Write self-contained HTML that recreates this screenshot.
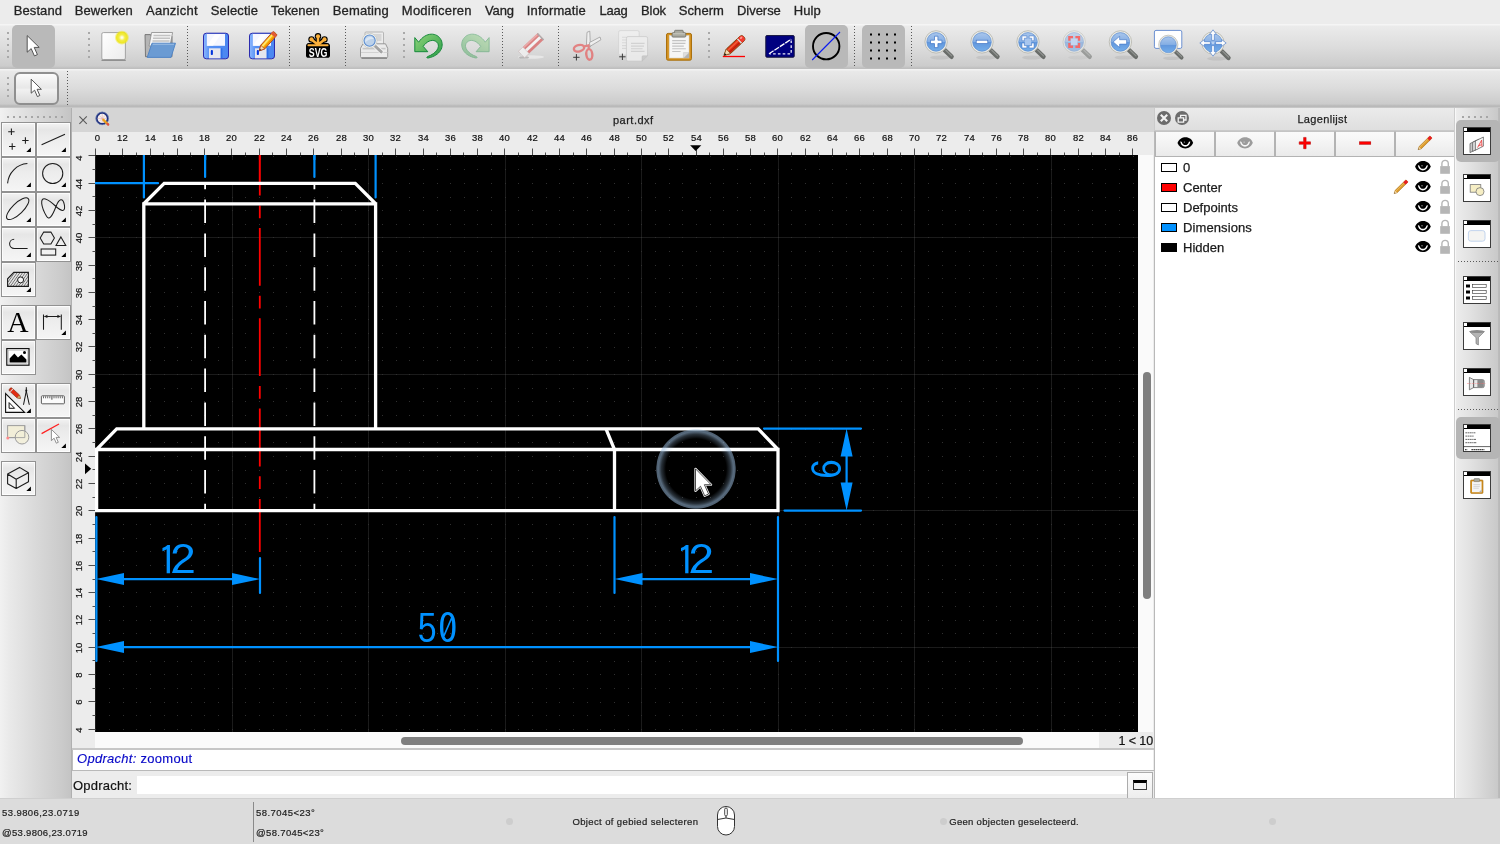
<!DOCTYPE html>
<html lang="nl">
<head>
<meta charset="utf-8">
<title>part.dxf - QCAD</title>
<style>
html,body{margin:0;padding:0;}
body{width:1500px;height:844px;overflow:hidden;background:#ececec;font-family:"Liberation Sans",sans-serif;font-size:13px;color:#262626;position:relative;}
.abs{position:absolute;}
#menubar{position:absolute;left:0;top:0;width:1500px;height:24px;background:#ececec;}
#menubar span{-webkit-text-stroke:0.3px #242424;position:absolute;top:3px;line-height:16px;font-size:13px;white-space:nowrap;color:#242424;}
#tb1{position:absolute;left:0;top:24px;width:1500px;height:45px;background:linear-gradient(#f5f5f5 0,#f5f5f5 1px,#ebebeb 2px,#dddddd 50%,#cccccc 93%,#bfbfbf 98%,#bfbfbf 100%);}
#tb2{position:absolute;left:0;top:69px;width:1500px;height:38px;background:linear-gradient(#f3f3f3 0,#f3f3f3 1px,#e9e9e9 2px,#dcdcdc 50%,#cbcbcb 92%,#b9b9b9 97%,#b9b9b9 100%);}
.sel{position:absolute;background:#b9b9b9;border-radius:5px;}
.vsep{position:absolute;top:2px;width:1px;height:40px;background:repeating-linear-gradient(180deg,#585858 0,#585858 1px,transparent 1px,transparent 3px);}
.hsep{position:absolute;left:4px;height:1px;width:40px;background:repeating-linear-gradient(90deg,#585858 0,#585858 1px,transparent 1px,transparent 3px);}
.hdl{position:absolute;width:2px;}
.hdl i{position:absolute;left:0;width:2px;height:2px;background:#a9a9a9;}
svg{position:absolute;overflow:visible;}
#left{position:absolute;left:0;top:107px;width:72px;height:691px;background:linear-gradient(90deg,#f1f1f1 0%,#e9e9e9 14%,#d9d9d9 50%,#cbcbcb 85%,#c3c3c3 100%);}
.lb{position:absolute;width:32.8px;height:33px;border:1px solid #929292;background:linear-gradient(#f3f3f3 0%,#e6e6e6 20%,#ececec 42%,#f5f5f5 100%);box-shadow:inset 0 0 0 1px rgba(255,255,255,0.75);box-sizing:content-box;}
.lb svg{left:0;top:0;}
#tabbar{position:absolute;left:72px;top:108px;width:1082px;height:24px;background:#d5d5d5;}
#hruler{position:absolute;left:72px;top:132px;width:1081px;height:23px;background:#ececec;overflow:hidden;}
#vruler{position:absolute;left:72px;top:155px;width:23px;height:593px;background:#ececec;overflow:hidden;}
.rl{-webkit-text-stroke:0.2px #111;position:absolute;font-size:9.5px;line-height:10px;color:#111;white-space:nowrap;}
#status{position:absolute;left:0;top:798px;width:1500px;height:46px;background:#dcdcdc;}
#status span{-webkit-text-stroke:0.2px #1e1e1e;position:absolute;font-size:9.5px;line-height:12px;white-space:nowrap;color:#1e1e1e;}
.dot{position:absolute;width:7px;height:7px;border-radius:50%;background:#cdcdcd;}
#right{position:absolute;left:1155px;top:108px;width:299px;height:690px;background:#fff;}
#rtb{position:absolute;left:1454px;top:107px;width:46px;height:691px;background:linear-gradient(90deg,#f4f4f4 0%,#ececec 6%,#e2e2e2 35%,#d3d3d3 70%,#c9c9c9 95%,#b9b9b9 97%,#b9b9b9 100%);}
.wi{position:absolute;left:9.3px;width:25.6px;height:25.8px;border:1px solid #3c3c3c;background:#fff;box-sizing:content-box;}
.wi:before{content:"";position:absolute;left:0;top:0;width:25.6px;height:4px;background:#000;}
.wi:after{content:"";position:absolute;left:0;top:0;width:3px;height:3.2px;background:#fff;}
.lrow{position:absolute;left:0;width:299px;height:20px;}
.lrow b{position:absolute;left:6px;top:5px;width:14px;height:7px;border:1px solid #000;}
.lrow span{-webkit-text-stroke:0.25px #1a1a1a;position:absolute;left:28px;top:1px;transform:translateY(0.6px);line-height:16px;font-size:13px;color:#1a1a1a;font-weight:normal;}
.lbtn{position:absolute;top:23px;height:24px;width:58px;border:1px solid #b3b3b3;border-top-color:#c4c4c4;background:linear-gradient(#fafafa,#f3f3f3 50%,#eaeaea);box-sizing:content-box;}
</style>
</head>
<body>
<div id="app" style="position:absolute;left:0;top:0;width:1500px;height:844px;overflow:hidden;will-change:transform">
<div id="menubar">
<span style="left:13.8px;letter-spacing:0.07px">Bestand</span>
<span style="left:74.8px;letter-spacing:0.02px">Bewerken</span>
<span style="left:146.0px;letter-spacing:0.24px">Aanzicht</span>
<span style="left:210.8px;letter-spacing:0.12px">Selectie</span>
<span style="left:271.0px;letter-spacing:-0.05px">Tekenen</span>
<span style="left:332.8px;letter-spacing:0.13px">Bemating</span>
<span style="left:401.8px;letter-spacing:0.25px">Modificeren</span>
<span style="left:485.0px;letter-spacing:-0.15px">Vang</span>
<span style="left:526.8px;letter-spacing:0.12px">Informatie</span>
<span style="left:599.4px;letter-spacing:-0.23px">Laag</span>
<span style="left:641.0px;letter-spacing:-0.08px">Blok</span>
<span style="left:678.8px;letter-spacing:0.07px">Scherm</span>
<span style="left:737.0px;letter-spacing:-0.04px">Diverse</span>
<span style="left:793.8px;letter-spacing:0.06px">Hulp</span>
</div>
<div id="tb1">
<div class="sel" style="left:12px;top:1px;width:43px;height:43px"></div>
<div class="sel" style="left:805px;top:1px;width:43px;height:43px"></div>
<div class="sel" style="left:862px;top:1px;width:43px;height:43px"></div>
<div class="hdl" style="left:7px;top:8px"><i style="top:0"></i><i style="top:6px"></i><i style="top:12px"></i><i style="top:18px"></i><i style="top:24px"></i></div>
<div class="hdl" style="left:88px;top:8px"><i style="top:0"></i><i style="top:6px"></i><i style="top:12px"></i><i style="top:18px"></i><i style="top:24px"></i></div>
<div class="hdl" style="left:403px;top:8px"><i style="top:0"></i><i style="top:6px"></i><i style="top:12px"></i><i style="top:18px"></i><i style="top:24px"></i></div>
<div class="hdl" style="left:708px;top:8px"><i style="top:0"></i><i style="top:6px"></i><i style="top:12px"></i><i style="top:18px"></i><i style="top:24px"></i></div>
<div class="vsep" style="left:187px"></div>
<div class="vsep" style="left:289px"></div>
<div class="vsep" style="left:345px"></div>
<div class="vsep" style="left:502px"></div>
<div class="vsep" style="left:558px"></div>
<div class="vsep" style="left:854px"></div>
<div class="vsep" style="left:911px"></div>
<svg width="1500" height="45" viewBox="0 24 1500 45" style="left:0;top:0">
<defs>
<linearGradient id="gLens" x1="0" y1="0" x2="0" y2="1"><stop offset="0" stop-color="#a9c6ec"/><stop offset="0.48" stop-color="#86afe4"/><stop offset="0.5" stop-color="#6196dc"/><stop offset="1" stop-color="#74aeea"/></linearGradient>
<linearGradient id="gGreen" x1="0" y1="0" x2="1" y2="1"><stop offset="0" stop-color="#8fd47a"/><stop offset="1" stop-color="#2a9c47"/></linearGradient>
<linearGradient id="gFloppy" x1="0" y1="0" x2="1" y2="0"><stop offset="0" stop-color="#8db8ff"/><stop offset="0.25" stop-color="#5590f4"/><stop offset="1" stop-color="#4a86f0"/></linearGradient>
<radialGradient id="gGlow"><stop offset="0" stop-color="#ffffff"/><stop offset="0.14" stop-color="#fdfbd0"/><stop offset="0.4" stop-color="#f3ed48"/><stop offset="0.72" stop-color="#eee61a" stop-opacity="0.95"/><stop offset="1" stop-color="#eee61a" stop-opacity="0"/></radialGradient>
<linearGradient id="gPaper" x1="0" y1="0" x2="1" y2="1"><stop offset="0" stop-color="#ffffff"/><stop offset="1" stop-color="#ececec"/></linearGradient>
<g id="mag">
<ellipse cx="4" cy="15.6" rx="10" ry="2" fill="#000" opacity="0.07"/>
<path d="M8.6 8.2L15.4 14.8" stroke="#6a6d6a" stroke-width="4.6" stroke-linecap="round"/>
<path d="M9.8 8.4L15.6 14" stroke="#8f928f" stroke-width="1.3" stroke-linecap="round"/>
<circle cx="0" cy="0" r="11.2" fill="#ecece6" stroke="#b4b4ac" stroke-width="0.8"/>
<circle cx="0" cy="0" r="9.3" fill="url(#gLens)" stroke="#5a8bd0" stroke-width="0.7"/>
</g>
<g id="floppy">
<rect x="0.5" y="0.5" width="25" height="25.6" rx="2.8" fill="url(#gFloppy)" stroke="#2b2bae" stroke-width="1"/>
<rect x="3.8" y="1.3" width="18.2" height="11.8" fill="#f4f6ff"/>
<path d="M4 13L12 1.5h6L10 13z" fill="#fff" opacity="0.8"/>
<rect x="6" y="15.6" width="11.6" height="10" fill="#e6e6ee"/>
<rect x="7.8" y="17.4" width="2.1" height="5" rx="0.8" fill="#0033dd"/>
<rect x="17.8" y="15.6" width="1.6" height="10" fill="#2f6fe8"/>
</g>
</defs>
<!-- pointer -->
<path d="M27.2 35.6V52.2L31.2 48.6L34.4 55.9L37.4 54.6L34.2 47.4H39.2Z" fill="#fff" stroke="#444" stroke-width="0.9" stroke-linejoin="round"/>
<!-- new -->
<rect x="101.8" y="32.6" width="23.6" height="27" rx="1.5" fill="url(#gPaper)" stroke="#a4a4a4" stroke-width="1"/>
<path d="M101.5 60.3H125.8" stroke="#8a8a8a" stroke-width="1.2"/>
<circle cx="121.9" cy="37.6" r="7.4" fill="url(#gGlow)"/>
<!-- open -->
<path d="M145 34.6h5.5l1 1.6h20.5v20.5h-26.5z" fill="#b5b5b5" stroke="#6e6e6e" stroke-width="0.9" stroke-linejoin="round"/>
<path d="M151.6 32.5h21l-2.6 13.5h-21z" fill="#f4f4f4" stroke="#8a8a8a" stroke-width="0.8"/>
<path d="M153.5 35.5h17M153 38.2h17M152.5 41h17" stroke="#c2c2c2" stroke-width="1.4"/>
<path d="M152 43.2H175.5L171 57.4H147.2Z" fill="#6b9bd3" stroke="#4d82c4" stroke-width="0.9" stroke-linejoin="round"/>
<path d="M152.8 44.3H174" stroke="#9cbde4" stroke-width="1"/>
<!-- save -->
<use href="#floppy" x="203" y="32.7"/>
<!-- save as -->
<use href="#floppy" x="249" y="32.7"/>
<g transform="translate(259.4 50.8) rotate(-48.2)">
<path d="M0 0L5 -2.7H22.6a1.2 1.2 0 0 1 1.2 1.2V1.5a1.2 1.2 0 0 1 -1.2 1.2H5Z" fill="#fcbf10" stroke="#a8300a" stroke-width="0.8" stroke-linejoin="round"/>
<path d="M5 -0.9H20" stroke="#ffe680" stroke-width="1.4"/>
<path d="M5 1.5H20" stroke="#f08a00" stroke-width="1.2"/>
<path d="M0 0L5 -2.7V2.7Z" fill="#f6dcb0" stroke="#a8300a" stroke-width="0.6"/>
<path d="M0 0L1.8 -1V1Z" fill="#333"/>
<path d="M20.3 -2.7h3.1v5.4h-3.1z" fill="#e05838"/>
</g>
<!-- SVG -->
<g stroke="#000" stroke-width="4.8" stroke-linecap="round" fill="none">
<path d="M318 44.5V36.6M318 44.8L311.8 39.7M318 44.8L324.2 39.7M309 45.3H327"/>
</g>
<circle cx="318" cy="36.3" r="3.2" fill="#000"/><circle cx="311.5" cy="39.4" r="3.2" fill="#000"/><circle cx="324.5" cy="39.4" r="3.2" fill="#000"/>
<rect x="306" y="43.4" width="24" height="14.4" rx="2.6" fill="#000"/>
<g stroke="#fbb03b" stroke-width="2.5" stroke-linecap="round" fill="none">
<path d="M318 44.5V36.6M318 44.8L311.8 39.7M318 44.8L324.2 39.7"/>
</g>
<path d="M308.4 45.3H327.6" stroke="#fbb03b" stroke-width="1.9" stroke-linecap="round"/>
<circle cx="318" cy="36.3" r="2.1" fill="#fbb03b"/><circle cx="311.5" cy="39.4" r="2.1" fill="#fbb03b"/><circle cx="324.5" cy="39.4" r="2.1" fill="#fbb03b"/>
<text transform="translate(318.1 56.7) scale(0.66 1)" text-anchor="middle" font-family="Liberation Sans, sans-serif" font-weight="bold" font-size="13.4" fill="#fff">SVG</text>
<!-- print preview -->
<rect x="365" y="32" width="18.5" height="14" rx="1" fill="#ececec" stroke="#a8a8a8" stroke-width="0.8"/>
<rect x="374" y="34" width="7.5" height="7" fill="#d6d6d6"/>
<path d="M363 43.8h22.5l2.2 4.5v8.2a1.2 1.2 0 0 1 -1.2 1.2h-24.8a1.2 1.2 0 0 1 -1.2 -1.2v-8.2z" fill="#ebebeb" stroke="#8e8e8e" stroke-width="0.9"/>
<path d="M361 52.5h26.4" stroke="#d2d2d2" stroke-width="1"/>
<path d="M362.6 48.6h23" stroke="#c6c6c6" stroke-width="1.6"/>
<path d="M361.5 58.2h25.5" stroke="#7e7e7e" stroke-width="1.2"/>
<path d="M375 46L381.3 51.8" stroke="#f4f4f4" stroke-width="4.6" stroke-linecap="round"/>
<path d="M375 46L381.3 51.8" stroke="#a4a4a4" stroke-width="3" stroke-linecap="round"/>
<circle cx="369.6" cy="40.6" r="7.4" fill="#f4f4f0" stroke="#c4c4bc" stroke-width="0.7"/>
<circle cx="369.6" cy="40.6" r="5.6" fill="#bdd2ea" stroke="#5b8ccf" stroke-width="1.1"/>
<path d="M365.4 42.5a4.6 4.6 0 0 1 8.4 -3.5a9 9 0 0 0 -8.4 3.5z" fill="#dbe7f5"/>
<!-- undo -->
<path id="undo" d="M414.8 37.6V51.7H427.8L423.2 46.4C426.6 41.2 431.8 39.4 435.2 41C440.8 43.6 439.6 52.2 427.4 56.7C426.4 57.1 426.8 58.3 428 58C440.6 55.6 444.4 46.4 441 39.8C437.2 32.4 426 31.4 418.6 42.2Z" fill="url(#gGreen)" stroke="#16893a" stroke-width="1" stroke-linejoin="round"/>
<use href="#undo" transform="translate(903.9 0) scale(-1 1)" opacity="0.42"/>
<!-- eraser (disabled) -->
<g opacity="0.62">
<ellipse cx="531" cy="57" rx="13" ry="1.8" fill="#fff" opacity="0.7"/>
<ellipse cx="524" cy="57.4" rx="5" ry="1.2" fill="#777" opacity="0.6"/>
<g transform="translate(518.4 51.3) rotate(-43.3)">
<rect x="0" y="0" width="26.6" height="9" fill="#d84a4a"/>
<rect x="0" y="3.2" width="26.6" height="2.9" fill="#fff"/>
<rect x="0" y="0" width="6.2" height="9" fill="#fafafa" stroke="#b9b9b9" stroke-width="0.5"/>
<rect x="25.4" y="0" width="1.4" height="9" fill="#8a8a8a"/>
<rect x="6.2" y="0" width="19" height="1.6" fill="#ef8a8a"/>
</g>
</g>
<!-- cut -->
<g opacity="0.78">
<path d="M586.4 46L587 32.3L589.8 31.2L590.4 47Z" fill="#f3f3f3" stroke="#8a8a8a" stroke-width="0.8" stroke-linejoin="round"/>
<path d="M589.4 42.6L600 37L600.9 39.8L590 46.4Z" fill="#f3f3f3" stroke="#8a8a8a" stroke-width="0.8" stroke-linejoin="round"/>
<ellipse cx="579" cy="48.2" rx="5.2" ry="3.2" transform="rotate(-14 579 48.2)" fill="none" stroke="#e46a6a" stroke-width="2.4"/>
<ellipse cx="589.3" cy="54.4" rx="3" ry="5.3" transform="rotate(-6 589.3 54.4)" fill="none" stroke="#e46a6a" stroke-width="2.4"/>
<path d="M583.6 46.6L588.6 45.2L588.8 49.6" stroke="#e46a6a" stroke-width="2.2" fill="none" stroke-linejoin="round"/>
</g>
<path d="M573.2 57.3h6.4M576.4 54.1v6.4" stroke="#3a3a3a" stroke-width="1"/>
<!-- copy -->
<g opacity="0.8">
<rect x="618.6" y="30.6" width="20.6" height="24.4" rx="1.6" fill="#f0f0f0" stroke="#cfcfcf" stroke-width="0.8"/>
<path d="M622 37.2h6M622 40h6M622 42.8h6M622 45.6h6M622 48.4h6" stroke="#d6d6d6" stroke-width="1.1"/>
<path d="M628 36.6h18a1.6 1.6 0 0 1 1.6 1.6v17.6l-5.6 5.4h-14a1.6 1.6 0 0 1 -1.6 -1.6v-21.4a1.6 1.6 0 0 1 1.6 -1.6z" fill="#efefef" stroke="#c4c4c4" stroke-width="0.8"/>
<path d="M631 43.4h13.6M631 46.1h13M631 48.7h11.6M631 51.4h13.6" stroke="#d0d0d0" stroke-width="1.1"/>
<path d="M647.6 55.8l-5.6 5.4v-4.4a1 1 0 0 1 1 -1z" fill="#c9c9c9" stroke="#b4b4b4" stroke-width="0.5"/>
</g>
<path d="M619.2 56.8h6.4M622.4 53.6v6.4" stroke="#3a3a3a" stroke-width="1"/>
<!-- paste -->
<rect x="666.5" y="33.4" width="25" height="26.8" rx="1.6" fill="#d4911f" stroke="#a9700f" stroke-width="1"/>
<rect x="669.2" y="35.6" width="19.8" height="22.4" fill="#f6f6f6" stroke="#d8d8d0" stroke-width="0.6"/>
<path d="M672.2 40.6h13.6M672.2 43.4h13.2M672.2 46.1h11.6M672.2 48.8h13.6M672.2 51.5h8.4" stroke="#c3c3c3" stroke-width="1.1"/>
<path d="M689 52.6v5.4h-5.6z" fill="#b3b3b3"/><path d="M683.4 52.6h5.6l-5.6 5.4z" fill="#dedede" stroke="#bdbdbd" stroke-width="0.4"/>
<path d="M675.4 30.3h7a0.8 0.8 0 0 1 0.8 0.8v1.6h1.6a1 1 0 0 1 1 1v2.4a1 1 0 0 1 -1 1h-11.8a1 1 0 0 1 -1 -1v-2.4a1 1 0 0 1 1 -1h1.6v-1.6a0.8 0.8 0 0 1 0.8 -0.8z" fill="#a9a99f" stroke="#6c6c64" stroke-width="0.8"/>
<path d="M673 33.8h12" stroke="#c9c9c0" stroke-width="1"/>
<!-- pencil red -->
<path d="M722.8 56.5H745" stroke="#ff0000" stroke-width="1.3"/>
<g transform="translate(724 55.4) rotate(-43)">
<path d="M0 0L6 -3.1H24.6a2.6 2.6 0 0 1 2.6 2.6V0.5a2.6 2.6 0 0 1 -2.6 2.6H6Z" fill="#e32c12" stroke="#7a4a14" stroke-width="0.9" stroke-linejoin="round"/>
<path d="M6 -1H20" stroke="#f0603a" stroke-width="1.4"/>
<path d="M6 1.4H20" stroke="#b8200c" stroke-width="1.2"/>
<path d="M0 0L6 -3.1V3.1Z" fill="#f3d9b0" stroke="#7a4a14" stroke-width="0.6"/>
<path d="M0 0L2.2 -1.15V1.15Z" fill="#111"/>
<rect x="20.4" y="-3" width="1.6" height="6" fill="#d6d6d6"/>
<path d="M22 -3h2.6a2.4 2.4 0 0 1 2.4 2.4v1.2a2.4 2.4 0 0 1 -2.4 2.4h-2.6z" fill="#f23a30"/>
<ellipse cx="24.6" cy="-1.2" rx="1.4" ry="0.9" fill="#ff9a90"/>
</g>
<!-- navy tri -->
<rect x="765.8" y="35.6" width="28.4" height="21.6" rx="1" fill="#000080" stroke="#14143c" stroke-width="1"/>
<path d="M769 53.8L791.2 39.2" stroke="#fff" stroke-width="1.3" stroke-dasharray="5.5 1"/>
<path d="M791.2 40.5V53.8H769.5" stroke="#e8e8f8" stroke-width="1.3" fill="none" stroke-dasharray="2.6 2.2"/>
<!-- circle slash -->
<circle cx="826.2" cy="46.2" r="13.2" fill="none" stroke="#000" stroke-width="1.9"/>
<path d="M812.2 60L840 32" stroke="#0a1af0" stroke-width="1.1"/>
<!-- grid dots -->
<path d="M870 34.5h2M878 34.5h2M886 34.5h2M894 34.5h2M870 42.5h2M878 42.5h2M886 42.5h2M894 42.5h2M870 50.5h2M878 50.5h2M886 50.5h2M894 50.5h2M870 58.5h2M878 58.5h2M886 58.5h2M894 58.5h2" stroke="#000" stroke-width="2"/>
<!-- zoom in -->
<use href="#mag" x="936.1" y="41.9"/>
<path d="M934.5 36.2h3.4v4h4v3.4h-4v4h-3.4v-4h-4v-3.4h4z" fill="#fff" stroke="#3c72c4" stroke-width="0.7"/>
<!-- zoom out -->
<use href="#mag" x="982" y="41.9"/>
<rect x="976.2" y="40.2" width="11.6" height="3.4" fill="#fff" stroke="#3c72c4" stroke-width="0.7"/>
<!-- zoom auto -->
<use href="#mag" x="1028" y="41.9"/>
<rect x="1024.8" y="38.7" width="6.4" height="6.4" fill="#a8c6ee"/>
<path d="M1022.0 35.9h4.8v2.3h-2.5v2.5h-2.3zM1022.0 47.9h4.8v-2.3h-2.5v-2.5h-2.3zM1034.0 35.9h-4.8v2.3h2.5v2.5h2.3zM1034.0 47.9h-4.8v-2.3h2.5v-2.5h2.3z" fill="#fff" stroke="#3c72c4" stroke-width="0.5"/>
<!-- zoom selection (disabled) -->
<g opacity="0.55"><use href="#mag" x="1074.2" y="41.9"/></g>
<rect x="1071" y="38.7" width="6.4" height="6.4" fill="#c3d6f0"/>
<path d="M1068.2 35.9h4.8v2.3h-2.5v2.5h-2.3zM1068.2 47.9h4.8v-2.3h-2.5v-2.5h-2.3zM1080.2 35.9h-4.8v2.3h2.5v2.5h2.3zM1080.2 47.9h-4.8v-2.3h2.5v-2.5h2.3z" fill="#f26a6a"/>
<!-- zoom previous -->
<use href="#mag" x="1120.4" y="41.9"/>
<path d="M1113.2 41.9l6.4-5.6v3.4h7v4.4h-7v3.4z" fill="#fff" stroke="#3c72c4" stroke-width="0.6" stroke-linejoin="round"/>
<!-- zoom window -->
<rect x="1154.4" y="30.4" width="27.4" height="18" rx="1.6" fill="#fff" stroke="#6b90d2" stroke-width="1"/>
<g transform="translate(1168.3 44.8) scale(0.86)"><use href="#mag"/></g>
<!-- pan zoom -->
<use href="#mag" x="1213" y="43"/>
<path transform="rotate(0 1213 43)" d="M1213 29.8l3.4 4.6h-2.1v6h-2.6v-6h-2.1z" fill="#fff" stroke="#3c72c4" stroke-width="0.6" stroke-linejoin="round"/>
<path transform="rotate(90 1213 43)" d="M1213 29.8l3.4 4.6h-2.1v6h-2.6v-6h-2.1z" fill="#fff" stroke="#3c72c4" stroke-width="0.6" stroke-linejoin="round"/>
<path transform="rotate(180 1213 43)" d="M1213 29.8l3.4 4.6h-2.1v6h-2.6v-6h-2.1z" fill="#fff" stroke="#3c72c4" stroke-width="0.6" stroke-linejoin="round"/>
<path transform="rotate(270 1213 43)" d="M1213 29.8l3.4 4.6h-2.1v6h-2.6v-6h-2.1z" fill="#fff" stroke="#3c72c4" stroke-width="0.6" stroke-linejoin="round"/>
<rect x="1211.7" y="41.7" width="2.6" height="2.6" fill="#b8d0f0"/>
</svg>

</div>
<div id="tb2">
<div class="hdl" style="left:7px;top:8px"><i style="top:0"></i><i style="top:6px"></i><i style="top:12px"></i><i style="top:18px"></i></div>
<div class="abs" style="left:14px;top:3px;width:41.4px;height:29px;border:2px solid #8f8f8f;border-radius:6px;background:linear-gradient(#fbfbfb 0%,#e8e8e8 48%,#f1f1f1 54%,#dbdbdb 100%)"></div>
<div class="vsep" style="left:67px;top:2px;height:35px"></div>
<svg width="70" height="38" viewBox="0 69 70 38" style="left:0;top:0">
<path d="M31.2 79.2V93.2L34.6 90.2L37.4 96.6L39.8 95.5L37.1 89.3H41.4Z" fill="#fff" stroke="#444" stroke-width="0.9" stroke-linejoin="round"/>
</svg>

</div>
<div id="left">
<div class="abs" style="left:71px;top:0;width:1px;height:691px;background:#b0b0b0"></div>
<svg width="72" height="4" style="left:0;top:9px"><path d="M7 1H65" stroke="#a6a6a6" stroke-width="2" stroke-dasharray="2 4" fill="none"/></svg>
<div class="lb" style="left:1px;top:15px"></div>
<div class="lb" style="left:36px;top:15px"></div>
<div class="lb" style="left:1px;top:50px"></div>
<div class="lb" style="left:36px;top:50px"></div>
<div class="lb" style="left:1px;top:85px"></div>
<div class="lb" style="left:36px;top:85px"></div>
<div class="lb" style="left:1px;top:120px"></div>
<div class="lb" style="left:36px;top:120px"></div>
<div class="lb" style="left:1px;top:155px"></div>
<div class="lb" style="left:1px;top:198px"></div>
<div class="lb" style="left:36px;top:198px"></div>
<div class="lb" style="left:1px;top:233px"></div>
<div class="lb" style="left:1px;top:276px"></div>
<div class="lb" style="left:36px;top:276px"></div>
<div class="lb" style="left:1px;top:311px"></div>
<div class="lb" style="left:36px;top:311px"></div>
<div class="lb" style="left:1px;top:354px"></div>
<svg width="72" height="691" viewBox="0 107 72 691" style="left:0;top:0">
<path d="M30.9 147.4v4.6h-4.6zM65.9 147.4v4.6h-4.6zM30.9 182.4v4.6h-4.6zM65.9 182.4v4.6h-4.6zM30.9 217.4v4.6h-4.6zM65.9 217.4v4.6h-4.6zM30.9 252.4v4.6h-4.6zM65.9 252.4v4.6h-4.6zM30.9 287.4v4.6h-4.6zM65.9 330.4v4.6h-4.6zM30.9 408.4v4.6h-4.6zM65.9 443.4v4.6h-4.6zM30.9 486.4v4.6h-4.6z" fill="#000"/>
<g fill="none" stroke="#1c1c1c" stroke-width="1.05">
<path d="M8.2 131.7h6.4M11.4 128.5v6.4M22.2 140.5h6.4M25.4 137.3v6.4M9 146.5h6.4M12.2 143.3v6.4"/>
<path d="M41.6 144.8L65 134.2"/>
<path d="M7.6 183.4A21.4 21.4 0 0 1 27.4 163.6"/>
<circle cx="52.7" cy="173.5" r="10.1"/>
<ellipse cx="17.7" cy="208.7" rx="14.6" ry="5.4" transform="rotate(-44 17.7 208.7)"/>
<path d="M41.7 203.5C41 195.5 47.5 198.5 56 206.5C62 212 65.6 212 64.4 205C63 197 59 198.5 56 206.5C52 217 49 220.5 46.4 216C44 212 42.2 208 41.7 203.5Z"/>
<path d="M14.2 239.2A4.6 4.6 0 0 0 14.2 248.4H27.6"/>
<path d="M40.2 238L43.7 232.1H50.9L54.4 238L50.9 243.9H43.7Z"/>
<path d="M60.9 236.9L65.8 245.4H56Z"/>
<rect x="41.1" y="249" width="14.6" height="6.1"/>
<path d="M43.5 314.6V329.8M61.3 314.6V329.8M44.5 316.4H60.3"/>
</g>
<defs><pattern id="hat" width="2.2" height="2.2" patternUnits="userSpaceOnUse" patternTransform="rotate(-55)"><rect width="2.2" height="2.2" fill="#e2e2e2"/><path d="M0 1.1H2.2" stroke="#6a6a6a" stroke-width="0.7"/></pattern></defs>
<path d="M7.6 286.4V278.8L13.8 272.4H28.4V286.4Z" fill="url(#hat)" stroke="#1c1c1c" stroke-width="1.1"/>
<circle cx="20.6" cy="279.9" r="3" fill="#f4f4f4" stroke="#1c1c1c" stroke-width="1"/>
<path d="M44 316.4l3.4-1.6v3.2zM60.8 316.4l-3.4-1.6v3.2z" fill="#1c1c1c"/>
<text x="18" y="331.9" text-anchor="middle" font-family="Liberation Serif, serif" font-size="29.5" fill="#000">A</text>
<rect x="6.8" y="348.6" width="22.2" height="16.6" fill="#fff" stroke="#111" stroke-width="1.2"/>
<rect x="8.4" y="350.2" width="19" height="13.4" fill="none" stroke="#aaa" stroke-width="0.5"/>
<path d="M9.6 362.4V358.6L14.4 353.6L18 357.4L21.4 354.6L26.4 359.6V362.4Z" fill="#000"/>
<circle cx="24.5" cy="352.6" r="1.5" fill="#000"/>
<!-- modify -->
<path d="M5.6 393.6V412.4H24.6Z" fill="#fdfdfd" stroke="#111" stroke-width="1.1" stroke-linejoin="miter"/>
<path d="M9.1 402.6V408.3H14.6Z" fill="none" stroke="#111" stroke-width="1"/>
<g transform="translate(20.4 398.4) rotate(-137.5)">
<path d="M0 0L3 -1.9H13a1.4 1.4 0 0 1 1.4 1.4V0.5a1.4 1.4 0 0 1 -1.4 1.4H3Z" fill="#e32c12" stroke="#7a2a10" stroke-width="0.6"/>
<path d="M0 0L3 -1.9V1.9Z" fill="#e8b878" stroke="#7a4a14" stroke-width="0.4"/>
<path d="M11.4 -1.9h1v3.8h-1z" fill="#ddd"/>
</g>
<path d="M26.3 387.2V391.4M26.3 391L23.5 404.8M26.3 391L29.3 404.8" stroke="#111" stroke-width="1" fill="none"/>
<circle cx="26.3" cy="390.6" r="1" fill="#111"/>
<!-- measure ruler -->
<rect x="41.4" y="395.8" width="23" height="8" rx="0.8" fill="#fbfbfb" stroke="#5e5e5e" stroke-width="1"/>
<path d="M43.5 396.3v2M45.6 396.3v2M47.7 396.3v2M49.8 396.3v2M54 396.3v2M56.1 396.3v2M58.2 396.3v2M60.3 396.3v2M62.4 396.3v2" stroke="#444" stroke-width="0.8"/>
<path d="M51.9 396.3v3.4" stroke="#333" stroke-width="0.9"/>
<!-- block -->
<rect x="7.6" y="425.6" width="17.2" height="12" fill="#f2eed8" stroke="#9c9c9c" stroke-width="1"/>
<circle cx="22" cy="437.2" r="6.8" fill="#f2eed8" fill-opacity="0.85" stroke="#9c9c9c" stroke-width="1"/>
<path d="M7.6 437.6H24.8V425.6" fill="none" stroke="#9c9c9c" stroke-width="0.8"/>
<circle cx="7.8" cy="438" r="1.5" fill="#ff8a8a"/>
<!-- select line -->
<path d="M41.6 433.6L59 424" stroke="#ff2020" stroke-width="1.2"/>
<path d="M51.4 429.4V440.6L54.1 438.2L56.3 443.2L58.3 442.3L56.1 437.4H59.6Z" fill="#fff" stroke="#777" stroke-width="0.8" stroke-linejoin="round"/>
<!-- cube -->
<path d="M7.6 474L19.5 467.4L28.5 472.7L16.2 479.2ZM7.6 474V483.8L16.2 488.5V479.2M16.2 488.5L28.5 481.8V472.7" fill="none" stroke="#1c1c1c" stroke-width="1.1" stroke-linejoin="round"/>
</svg>

</div>
<div class="abs" style="left:0;top:107px;width:1500px;height:1px;background:#c6c6c6;z-index:5"></div>
<div id="tabbar">
<svg width="12" height="12" style="left:6px;top:7px"><path d="M1.4 1.4L8.8 8.8M8.8 1.4L1.4 8.8" stroke="#5a5a5a" stroke-width="1.1" fill="none"/></svg>
<svg width="16" height="16" viewBox="95 111 16 16" style="left:23px;top:3px">
<circle cx="102.2" cy="118.4" r="5.6" fill="#f2f2f2" stroke="#1d2f7c" stroke-width="2"/>
<circle cx="102.2" cy="118.4" r="6.4" fill="none" stroke="#8a9ac8" stroke-width="0.6"/>
<path d="M102.2 113.8v9.2M97.6 118.4h9.2M99 115.2l6.4 6.4M105.4 115.2l-6.4 6.4" stroke="#e4a0a0" stroke-width="0.5"/>
<path d="M103.4 119.8L107.6 124" stroke="#eaa21c" stroke-width="2.4" stroke-linecap="round"/>
<path d="M107.4 123.8L108.2 124.6" stroke="#e05040" stroke-width="2.2" stroke-linecap="round"/>
</svg>

<span class="abs" style="left:511.3px;top:4px;transform:translateY(0.5px);width:100px;text-align:center;font-size:11px;letter-spacing:0.5px;line-height:15px;color:#222;-webkit-text-stroke:0.25px #222">part.dxf</span>
</div>
<div class="abs" style="left:1138px;top:155px;width:15px;height:593px;background:#fafafa"></div>
<div class="abs" style="left:95px;top:732px;width:1058px;height:16px;background:#fafafa"></div>
<div class="abs" style="left:1143px;top:372px;width:8px;height:227px;border-radius:4px;background:#7f7f7f"></div>
<div class="abs" style="left:401px;top:737px;width:622px;height:8px;border-radius:4px;background:#7f7f7f"></div>
<div class="abs" style="left:1099px;top:732px;width:54px;height:16px;background:#ebebeb"></div>
<span class="abs" style="left:1093px;top:733px;width:60px;text-align:right;font-size:12.5px;line-height:16px;color:#111;letter-spacing:-0.1px;-webkit-text-stroke:0.2px #111">1 &lt; 10</span>
<div class="abs" style="left:72px;top:748px;width:1082px;height:2px;background:#c6c6c6"></div>
<div class="abs" style="left:72px;top:750px;width:1081px;height:20px;background:#fff;border-left:1px solid #bdbdbd;box-sizing:border-box"></div>
<span class="abs" style="left:77px;top:750px;line-height:17px;font-size:13px;color:#0808c8;white-space:nowrap;letter-spacing:0.28px;-webkit-text-stroke:0.15px #0808c8"><i>Opdracht:</i> zoomout</span>
<div class="abs" style="left:72px;top:770px;width:1082px;height:1px;background:#b9b9b9"></div>
<div class="abs" style="left:72px;top:771px;width:1082px;height:27px;background:#ececec"></div>
<span class="abs" style="left:73px;top:777px;line-height:17px;font-size:13px;color:#111;white-space:nowrap;letter-spacing:0.23px;-webkit-text-stroke:0.2px #111">Opdracht:</span>
<div class="abs" style="left:137px;top:776px;width:990px;height:18px;background:#fff"></div>
<div class="abs" style="left:1127px;top:772px;width:24px;height:25px;border:1px solid #acacac;background:linear-gradient(#fcfcfc,#ededed);box-sizing:content-box"></div>
<div class="abs" style="left:1133px;top:780px;width:12px;height:8px;border:1px solid #3a3a3a;border-top:3px solid #000;background:#f2f2f2;box-sizing:content-box;height:6px"></div>
<div class="abs" style="left:1153.5px;top:131px;width:2px;height:667px;background:#b9b9b9"></div><div class="abs" style="left:1154px;top:108px;width:1px;height:23px;background:#cbcbcb"></div>
<svg id="cv" style="left:95px;top:155px;overflow:hidden" width="1043" height="577" viewBox="95 155 1043 577">
<rect x="95" y="155" width="1043" height="577" fill="#000"/>
<path d="M95.5 155V732M232.5 155V732M368.5 155V732M505.5 155V732M641.5 155V732M778.5 155V732M914.5 155V732M1051.5 155V732M95 647.5H1138M95 510.5H1138M95 374.5H1138M95 237.5H1138" stroke="#1b1b1b" stroke-width="1" fill="none"/>
<path d="M95 729.5h1M95 715.5h1M95 702.5h1M95 688.5h1M95 674.5h1M95 661.5h1M95 647.5h1M95 633.5h1M95 620.5h1M95 606.5h1M95 592.5h1M95 579.5h1M95 565.5h1M95 551.5h1M95 538.5h1M95 524.5h1M95 510.5h1M95 497.5h1M95 483.5h1M95 470.5h1M95 456.5h1M95 442.5h1M95 429.5h1M95 415.5h1M95 401.5h1M95 388.5h1M95 374.5h1M95 360.5h1M95 347.5h1M95 333.5h1M95 319.5h1M95 306.5h1M95 292.5h1M95 278.5h1M95 265.5h1M95 251.5h1M95 237.5h1M95 224.5h1M95 210.5h1M95 197.5h1M95 183.5h1M95 169.5h1M95 156.5h1M109 729.5h1M109 715.5h1M109 702.5h1M109 688.5h1M109 674.5h1M109 661.5h1M109 647.5h1M109 633.5h1M109 620.5h1M109 606.5h1M109 592.5h1M109 579.5h1M109 565.5h1M109 551.5h1M109 538.5h1M109 524.5h1M109 510.5h1M109 497.5h1M109 483.5h1M109 470.5h1M109 456.5h1M109 442.5h1M109 429.5h1M109 415.5h1M109 401.5h1M109 388.5h1M109 374.5h1M109 360.5h1M109 347.5h1M109 333.5h1M109 319.5h1M109 306.5h1M109 292.5h1M109 278.5h1M109 265.5h1M109 251.5h1M109 237.5h1M109 224.5h1M109 210.5h1M109 197.5h1M109 183.5h1M109 169.5h1M109 156.5h1M123 729.5h1M123 715.5h1M123 702.5h1M123 688.5h1M123 674.5h1M123 661.5h1M123 647.5h1M123 633.5h1M123 620.5h1M123 606.5h1M123 592.5h1M123 579.5h1M123 565.5h1M123 551.5h1M123 538.5h1M123 524.5h1M123 510.5h1M123 497.5h1M123 483.5h1M123 470.5h1M123 456.5h1M123 442.5h1M123 429.5h1M123 415.5h1M123 401.5h1M123 388.5h1M123 374.5h1M123 360.5h1M123 347.5h1M123 333.5h1M123 319.5h1M123 306.5h1M123 292.5h1M123 278.5h1M123 265.5h1M123 251.5h1M123 237.5h1M123 224.5h1M123 210.5h1M123 197.5h1M123 183.5h1M123 169.5h1M123 156.5h1M136 729.5h1M136 715.5h1M136 702.5h1M136 688.5h1M136 674.5h1M136 661.5h1M136 647.5h1M136 633.5h1M136 620.5h1M136 606.5h1M136 592.5h1M136 579.5h1M136 565.5h1M136 551.5h1M136 538.5h1M136 524.5h1M136 510.5h1M136 497.5h1M136 483.5h1M136 470.5h1M136 456.5h1M136 442.5h1M136 429.5h1M136 415.5h1M136 401.5h1M136 388.5h1M136 374.5h1M136 360.5h1M136 347.5h1M136 333.5h1M136 319.5h1M136 306.5h1M136 292.5h1M136 278.5h1M136 265.5h1M136 251.5h1M136 237.5h1M136 224.5h1M136 210.5h1M136 197.5h1M136 183.5h1M136 169.5h1M136 156.5h1M150 729.5h1M150 715.5h1M150 702.5h1M150 688.5h1M150 674.5h1M150 661.5h1M150 647.5h1M150 633.5h1M150 620.5h1M150 606.5h1M150 592.5h1M150 579.5h1M150 565.5h1M150 551.5h1M150 538.5h1M150 524.5h1M150 510.5h1M150 497.5h1M150 483.5h1M150 470.5h1M150 456.5h1M150 442.5h1M150 429.5h1M150 415.5h1M150 401.5h1M150 388.5h1M150 374.5h1M150 360.5h1M150 347.5h1M150 333.5h1M150 319.5h1M150 306.5h1M150 292.5h1M150 278.5h1M150 265.5h1M150 251.5h1M150 237.5h1M150 224.5h1M150 210.5h1M150 197.5h1M150 183.5h1M150 169.5h1M150 156.5h1M164 729.5h1M164 715.5h1M164 702.5h1M164 688.5h1M164 674.5h1M164 661.5h1M164 647.5h1M164 633.5h1M164 620.5h1M164 606.5h1M164 592.5h1M164 579.5h1M164 565.5h1M164 551.5h1M164 538.5h1M164 524.5h1M164 510.5h1M164 497.5h1M164 483.5h1M164 470.5h1M164 456.5h1M164 442.5h1M164 429.5h1M164 415.5h1M164 401.5h1M164 388.5h1M164 374.5h1M164 360.5h1M164 347.5h1M164 333.5h1M164 319.5h1M164 306.5h1M164 292.5h1M164 278.5h1M164 265.5h1M164 251.5h1M164 237.5h1M164 224.5h1M164 210.5h1M164 197.5h1M164 183.5h1M164 169.5h1M164 156.5h1M177 729.5h1M177 715.5h1M177 702.5h1M177 688.5h1M177 674.5h1M177 661.5h1M177 647.5h1M177 633.5h1M177 620.5h1M177 606.5h1M177 592.5h1M177 579.5h1M177 565.5h1M177 551.5h1M177 538.5h1M177 524.5h1M177 510.5h1M177 497.5h1M177 483.5h1M177 470.5h1M177 456.5h1M177 442.5h1M177 429.5h1M177 415.5h1M177 401.5h1M177 388.5h1M177 374.5h1M177 360.5h1M177 347.5h1M177 333.5h1M177 319.5h1M177 306.5h1M177 292.5h1M177 278.5h1M177 265.5h1M177 251.5h1M177 237.5h1M177 224.5h1M177 210.5h1M177 197.5h1M177 183.5h1M177 169.5h1M177 156.5h1M191 729.5h1M191 715.5h1M191 702.5h1M191 688.5h1M191 674.5h1M191 661.5h1M191 647.5h1M191 633.5h1M191 620.5h1M191 606.5h1M191 592.5h1M191 579.5h1M191 565.5h1M191 551.5h1M191 538.5h1M191 524.5h1M191 510.5h1M191 497.5h1M191 483.5h1M191 470.5h1M191 456.5h1M191 442.5h1M191 429.5h1M191 415.5h1M191 401.5h1M191 388.5h1M191 374.5h1M191 360.5h1M191 347.5h1M191 333.5h1M191 319.5h1M191 306.5h1M191 292.5h1M191 278.5h1M191 265.5h1M191 251.5h1M191 237.5h1M191 224.5h1M191 210.5h1M191 197.5h1M191 183.5h1M191 169.5h1M191 156.5h1M204 729.5h1M204 715.5h1M204 702.5h1M204 688.5h1M204 674.5h1M204 661.5h1M204 647.5h1M204 633.5h1M204 620.5h1M204 606.5h1M204 592.5h1M204 579.5h1M204 565.5h1M204 551.5h1M204 538.5h1M204 524.5h1M204 510.5h1M204 497.5h1M204 483.5h1M204 470.5h1M204 456.5h1M204 442.5h1M204 429.5h1M204 415.5h1M204 401.5h1M204 388.5h1M204 374.5h1M204 360.5h1M204 347.5h1M204 333.5h1M204 319.5h1M204 306.5h1M204 292.5h1M204 278.5h1M204 265.5h1M204 251.5h1M204 237.5h1M204 224.5h1M204 210.5h1M204 197.5h1M204 183.5h1M204 169.5h1M204 156.5h1M218 729.5h1M218 715.5h1M218 702.5h1M218 688.5h1M218 674.5h1M218 661.5h1M218 647.5h1M218 633.5h1M218 620.5h1M218 606.5h1M218 592.5h1M218 579.5h1M218 565.5h1M218 551.5h1M218 538.5h1M218 524.5h1M218 510.5h1M218 497.5h1M218 483.5h1M218 470.5h1M218 456.5h1M218 442.5h1M218 429.5h1M218 415.5h1M218 401.5h1M218 388.5h1M218 374.5h1M218 360.5h1M218 347.5h1M218 333.5h1M218 319.5h1M218 306.5h1M218 292.5h1M218 278.5h1M218 265.5h1M218 251.5h1M218 237.5h1M218 224.5h1M218 210.5h1M218 197.5h1M218 183.5h1M218 169.5h1M218 156.5h1M232 729.5h1M232 715.5h1M232 702.5h1M232 688.5h1M232 674.5h1M232 661.5h1M232 647.5h1M232 633.5h1M232 620.5h1M232 606.5h1M232 592.5h1M232 579.5h1M232 565.5h1M232 551.5h1M232 538.5h1M232 524.5h1M232 510.5h1M232 497.5h1M232 483.5h1M232 470.5h1M232 456.5h1M232 442.5h1M232 429.5h1M232 415.5h1M232 401.5h1M232 388.5h1M232 374.5h1M232 360.5h1M232 347.5h1M232 333.5h1M232 319.5h1M232 306.5h1M232 292.5h1M232 278.5h1M232 265.5h1M232 251.5h1M232 237.5h1M232 224.5h1M232 210.5h1M232 197.5h1M232 183.5h1M232 169.5h1M232 156.5h1M245 729.5h1M245 715.5h1M245 702.5h1M245 688.5h1M245 674.5h1M245 661.5h1M245 647.5h1M245 633.5h1M245 620.5h1M245 606.5h1M245 592.5h1M245 579.5h1M245 565.5h1M245 551.5h1M245 538.5h1M245 524.5h1M245 510.5h1M245 497.5h1M245 483.5h1M245 470.5h1M245 456.5h1M245 442.5h1M245 429.5h1M245 415.5h1M245 401.5h1M245 388.5h1M245 374.5h1M245 360.5h1M245 347.5h1M245 333.5h1M245 319.5h1M245 306.5h1M245 292.5h1M245 278.5h1M245 265.5h1M245 251.5h1M245 237.5h1M245 224.5h1M245 210.5h1M245 197.5h1M245 183.5h1M245 169.5h1M245 156.5h1M259 729.5h1M259 715.5h1M259 702.5h1M259 688.5h1M259 674.5h1M259 661.5h1M259 647.5h1M259 633.5h1M259 620.5h1M259 606.5h1M259 592.5h1M259 579.5h1M259 565.5h1M259 551.5h1M259 538.5h1M259 524.5h1M259 510.5h1M259 497.5h1M259 483.5h1M259 470.5h1M259 456.5h1M259 442.5h1M259 429.5h1M259 415.5h1M259 401.5h1M259 388.5h1M259 374.5h1M259 360.5h1M259 347.5h1M259 333.5h1M259 319.5h1M259 306.5h1M259 292.5h1M259 278.5h1M259 265.5h1M259 251.5h1M259 237.5h1M259 224.5h1M259 210.5h1M259 197.5h1M259 183.5h1M259 169.5h1M259 156.5h1M273 729.5h1M273 715.5h1M273 702.5h1M273 688.5h1M273 674.5h1M273 661.5h1M273 647.5h1M273 633.5h1M273 620.5h1M273 606.5h1M273 592.5h1M273 579.5h1M273 565.5h1M273 551.5h1M273 538.5h1M273 524.5h1M273 510.5h1M273 497.5h1M273 483.5h1M273 470.5h1M273 456.5h1M273 442.5h1M273 429.5h1M273 415.5h1M273 401.5h1M273 388.5h1M273 374.5h1M273 360.5h1M273 347.5h1M273 333.5h1M273 319.5h1M273 306.5h1M273 292.5h1M273 278.5h1M273 265.5h1M273 251.5h1M273 237.5h1M273 224.5h1M273 210.5h1M273 197.5h1M273 183.5h1M273 169.5h1M273 156.5h1M286 729.5h1M286 715.5h1M286 702.5h1M286 688.5h1M286 674.5h1M286 661.5h1M286 647.5h1M286 633.5h1M286 620.5h1M286 606.5h1M286 592.5h1M286 579.5h1M286 565.5h1M286 551.5h1M286 538.5h1M286 524.5h1M286 510.5h1M286 497.5h1M286 483.5h1M286 470.5h1M286 456.5h1M286 442.5h1M286 429.5h1M286 415.5h1M286 401.5h1M286 388.5h1M286 374.5h1M286 360.5h1M286 347.5h1M286 333.5h1M286 319.5h1M286 306.5h1M286 292.5h1M286 278.5h1M286 265.5h1M286 251.5h1M286 237.5h1M286 224.5h1M286 210.5h1M286 197.5h1M286 183.5h1M286 169.5h1M286 156.5h1M300 729.5h1M300 715.5h1M300 702.5h1M300 688.5h1M300 674.5h1M300 661.5h1M300 647.5h1M300 633.5h1M300 620.5h1M300 606.5h1M300 592.5h1M300 579.5h1M300 565.5h1M300 551.5h1M300 538.5h1M300 524.5h1M300 510.5h1M300 497.5h1M300 483.5h1M300 470.5h1M300 456.5h1M300 442.5h1M300 429.5h1M300 415.5h1M300 401.5h1M300 388.5h1M300 374.5h1M300 360.5h1M300 347.5h1M300 333.5h1M300 319.5h1M300 306.5h1M300 292.5h1M300 278.5h1M300 265.5h1M300 251.5h1M300 237.5h1M300 224.5h1M300 210.5h1M300 197.5h1M300 183.5h1M300 169.5h1M300 156.5h1M314 729.5h1M314 715.5h1M314 702.5h1M314 688.5h1M314 674.5h1M314 661.5h1M314 647.5h1M314 633.5h1M314 620.5h1M314 606.5h1M314 592.5h1M314 579.5h1M314 565.5h1M314 551.5h1M314 538.5h1M314 524.5h1M314 510.5h1M314 497.5h1M314 483.5h1M314 470.5h1M314 456.5h1M314 442.5h1M314 429.5h1M314 415.5h1M314 401.5h1M314 388.5h1M314 374.5h1M314 360.5h1M314 347.5h1M314 333.5h1M314 319.5h1M314 306.5h1M314 292.5h1M314 278.5h1M314 265.5h1M314 251.5h1M314 237.5h1M314 224.5h1M314 210.5h1M314 197.5h1M314 183.5h1M314 169.5h1M314 156.5h1M327 729.5h1M327 715.5h1M327 702.5h1M327 688.5h1M327 674.5h1M327 661.5h1M327 647.5h1M327 633.5h1M327 620.5h1M327 606.5h1M327 592.5h1M327 579.5h1M327 565.5h1M327 551.5h1M327 538.5h1M327 524.5h1M327 510.5h1M327 497.5h1M327 483.5h1M327 470.5h1M327 456.5h1M327 442.5h1M327 429.5h1M327 415.5h1M327 401.5h1M327 388.5h1M327 374.5h1M327 360.5h1M327 347.5h1M327 333.5h1M327 319.5h1M327 306.5h1M327 292.5h1M327 278.5h1M327 265.5h1M327 251.5h1M327 237.5h1M327 224.5h1M327 210.5h1M327 197.5h1M327 183.5h1M327 169.5h1M327 156.5h1M341 729.5h1M341 715.5h1M341 702.5h1M341 688.5h1M341 674.5h1M341 661.5h1M341 647.5h1M341 633.5h1M341 620.5h1M341 606.5h1M341 592.5h1M341 579.5h1M341 565.5h1M341 551.5h1M341 538.5h1M341 524.5h1M341 510.5h1M341 497.5h1M341 483.5h1M341 470.5h1M341 456.5h1M341 442.5h1M341 429.5h1M341 415.5h1M341 401.5h1M341 388.5h1M341 374.5h1M341 360.5h1M341 347.5h1M341 333.5h1M341 319.5h1M341 306.5h1M341 292.5h1M341 278.5h1M341 265.5h1M341 251.5h1M341 237.5h1M341 224.5h1M341 210.5h1M341 197.5h1M341 183.5h1M341 169.5h1M341 156.5h1M355 729.5h1M355 715.5h1M355 702.5h1M355 688.5h1M355 674.5h1M355 661.5h1M355 647.5h1M355 633.5h1M355 620.5h1M355 606.5h1M355 592.5h1M355 579.5h1M355 565.5h1M355 551.5h1M355 538.5h1M355 524.5h1M355 510.5h1M355 497.5h1M355 483.5h1M355 470.5h1M355 456.5h1M355 442.5h1M355 429.5h1M355 415.5h1M355 401.5h1M355 388.5h1M355 374.5h1M355 360.5h1M355 347.5h1M355 333.5h1M355 319.5h1M355 306.5h1M355 292.5h1M355 278.5h1M355 265.5h1M355 251.5h1M355 237.5h1M355 224.5h1M355 210.5h1M355 197.5h1M355 183.5h1M355 169.5h1M355 156.5h1M368 729.5h1M368 715.5h1M368 702.5h1M368 688.5h1M368 674.5h1M368 661.5h1M368 647.5h1M368 633.5h1M368 620.5h1M368 606.5h1M368 592.5h1M368 579.5h1M368 565.5h1M368 551.5h1M368 538.5h1M368 524.5h1M368 510.5h1M368 497.5h1M368 483.5h1M368 470.5h1M368 456.5h1M368 442.5h1M368 429.5h1M368 415.5h1M368 401.5h1M368 388.5h1M368 374.5h1M368 360.5h1M368 347.5h1M368 333.5h1M368 319.5h1M368 306.5h1M368 292.5h1M368 278.5h1M368 265.5h1M368 251.5h1M368 237.5h1M368 224.5h1M368 210.5h1M368 197.5h1M368 183.5h1M368 169.5h1M368 156.5h1M382 729.5h1M382 715.5h1M382 702.5h1M382 688.5h1M382 674.5h1M382 661.5h1M382 647.5h1M382 633.5h1M382 620.5h1M382 606.5h1M382 592.5h1M382 579.5h1M382 565.5h1M382 551.5h1M382 538.5h1M382 524.5h1M382 510.5h1M382 497.5h1M382 483.5h1M382 470.5h1M382 456.5h1M382 442.5h1M382 429.5h1M382 415.5h1M382 401.5h1M382 388.5h1M382 374.5h1M382 360.5h1M382 347.5h1M382 333.5h1M382 319.5h1M382 306.5h1M382 292.5h1M382 278.5h1M382 265.5h1M382 251.5h1M382 237.5h1M382 224.5h1M382 210.5h1M382 197.5h1M382 183.5h1M382 169.5h1M382 156.5h1M396 729.5h1M396 715.5h1M396 702.5h1M396 688.5h1M396 674.5h1M396 661.5h1M396 647.5h1M396 633.5h1M396 620.5h1M396 606.5h1M396 592.5h1M396 579.5h1M396 565.5h1M396 551.5h1M396 538.5h1M396 524.5h1M396 510.5h1M396 497.5h1M396 483.5h1M396 470.5h1M396 456.5h1M396 442.5h1M396 429.5h1M396 415.5h1M396 401.5h1M396 388.5h1M396 374.5h1M396 360.5h1M396 347.5h1M396 333.5h1M396 319.5h1M396 306.5h1M396 292.5h1M396 278.5h1M396 265.5h1M396 251.5h1M396 237.5h1M396 224.5h1M396 210.5h1M396 197.5h1M396 183.5h1M396 169.5h1M396 156.5h1M409 729.5h1M409 715.5h1M409 702.5h1M409 688.5h1M409 674.5h1M409 661.5h1M409 647.5h1M409 633.5h1M409 620.5h1M409 606.5h1M409 592.5h1M409 579.5h1M409 565.5h1M409 551.5h1M409 538.5h1M409 524.5h1M409 510.5h1M409 497.5h1M409 483.5h1M409 470.5h1M409 456.5h1M409 442.5h1M409 429.5h1M409 415.5h1M409 401.5h1M409 388.5h1M409 374.5h1M409 360.5h1M409 347.5h1M409 333.5h1M409 319.5h1M409 306.5h1M409 292.5h1M409 278.5h1M409 265.5h1M409 251.5h1M409 237.5h1M409 224.5h1M409 210.5h1M409 197.5h1M409 183.5h1M409 169.5h1M409 156.5h1M423 729.5h1M423 715.5h1M423 702.5h1M423 688.5h1M423 674.5h1M423 661.5h1M423 647.5h1M423 633.5h1M423 620.5h1M423 606.5h1M423 592.5h1M423 579.5h1M423 565.5h1M423 551.5h1M423 538.5h1M423 524.5h1M423 510.5h1M423 497.5h1M423 483.5h1M423 470.5h1M423 456.5h1M423 442.5h1M423 429.5h1M423 415.5h1M423 401.5h1M423 388.5h1M423 374.5h1M423 360.5h1M423 347.5h1M423 333.5h1M423 319.5h1M423 306.5h1M423 292.5h1M423 278.5h1M423 265.5h1M423 251.5h1M423 237.5h1M423 224.5h1M423 210.5h1M423 197.5h1M423 183.5h1M423 169.5h1M423 156.5h1M437 729.5h1M437 715.5h1M437 702.5h1M437 688.5h1M437 674.5h1M437 661.5h1M437 647.5h1M437 633.5h1M437 620.5h1M437 606.5h1M437 592.5h1M437 579.5h1M437 565.5h1M437 551.5h1M437 538.5h1M437 524.5h1M437 510.5h1M437 497.5h1M437 483.5h1M437 470.5h1M437 456.5h1M437 442.5h1M437 429.5h1M437 415.5h1M437 401.5h1M437 388.5h1M437 374.5h1M437 360.5h1M437 347.5h1M437 333.5h1M437 319.5h1M437 306.5h1M437 292.5h1M437 278.5h1M437 265.5h1M437 251.5h1M437 237.5h1M437 224.5h1M437 210.5h1M437 197.5h1M437 183.5h1M437 169.5h1M437 156.5h1M450 729.5h1M450 715.5h1M450 702.5h1M450 688.5h1M450 674.5h1M450 661.5h1M450 647.5h1M450 633.5h1M450 620.5h1M450 606.5h1M450 592.5h1M450 579.5h1M450 565.5h1M450 551.5h1M450 538.5h1M450 524.5h1M450 510.5h1M450 497.5h1M450 483.5h1M450 470.5h1M450 456.5h1M450 442.5h1M450 429.5h1M450 415.5h1M450 401.5h1M450 388.5h1M450 374.5h1M450 360.5h1M450 347.5h1M450 333.5h1M450 319.5h1M450 306.5h1M450 292.5h1M450 278.5h1M450 265.5h1M450 251.5h1M450 237.5h1M450 224.5h1M450 210.5h1M450 197.5h1M450 183.5h1M450 169.5h1M450 156.5h1M464 729.5h1M464 715.5h1M464 702.5h1M464 688.5h1M464 674.5h1M464 661.5h1M464 647.5h1M464 633.5h1M464 620.5h1M464 606.5h1M464 592.5h1M464 579.5h1M464 565.5h1M464 551.5h1M464 538.5h1M464 524.5h1M464 510.5h1M464 497.5h1M464 483.5h1M464 470.5h1M464 456.5h1M464 442.5h1M464 429.5h1M464 415.5h1M464 401.5h1M464 388.5h1M464 374.5h1M464 360.5h1M464 347.5h1M464 333.5h1M464 319.5h1M464 306.5h1M464 292.5h1M464 278.5h1M464 265.5h1M464 251.5h1M464 237.5h1M464 224.5h1M464 210.5h1M464 197.5h1M464 183.5h1M464 169.5h1M464 156.5h1M477 729.5h1M477 715.5h1M477 702.5h1M477 688.5h1M477 674.5h1M477 661.5h1M477 647.5h1M477 633.5h1M477 620.5h1M477 606.5h1M477 592.5h1M477 579.5h1M477 565.5h1M477 551.5h1M477 538.5h1M477 524.5h1M477 510.5h1M477 497.5h1M477 483.5h1M477 470.5h1M477 456.5h1M477 442.5h1M477 429.5h1M477 415.5h1M477 401.5h1M477 388.5h1M477 374.5h1M477 360.5h1M477 347.5h1M477 333.5h1M477 319.5h1M477 306.5h1M477 292.5h1M477 278.5h1M477 265.5h1M477 251.5h1M477 237.5h1M477 224.5h1M477 210.5h1M477 197.5h1M477 183.5h1M477 169.5h1M477 156.5h1M491 729.5h1M491 715.5h1M491 702.5h1M491 688.5h1M491 674.5h1M491 661.5h1M491 647.5h1M491 633.5h1M491 620.5h1M491 606.5h1M491 592.5h1M491 579.5h1M491 565.5h1M491 551.5h1M491 538.5h1M491 524.5h1M491 510.5h1M491 497.5h1M491 483.5h1M491 470.5h1M491 456.5h1M491 442.5h1M491 429.5h1M491 415.5h1M491 401.5h1M491 388.5h1M491 374.5h1M491 360.5h1M491 347.5h1M491 333.5h1M491 319.5h1M491 306.5h1M491 292.5h1M491 278.5h1M491 265.5h1M491 251.5h1M491 237.5h1M491 224.5h1M491 210.5h1M491 197.5h1M491 183.5h1M491 169.5h1M491 156.5h1M505 729.5h1M505 715.5h1M505 702.5h1M505 688.5h1M505 674.5h1M505 661.5h1M505 647.5h1M505 633.5h1M505 620.5h1M505 606.5h1M505 592.5h1M505 579.5h1M505 565.5h1M505 551.5h1M505 538.5h1M505 524.5h1M505 510.5h1M505 497.5h1M505 483.5h1M505 470.5h1M505 456.5h1M505 442.5h1M505 429.5h1M505 415.5h1M505 401.5h1M505 388.5h1M505 374.5h1M505 360.5h1M505 347.5h1M505 333.5h1M505 319.5h1M505 306.5h1M505 292.5h1M505 278.5h1M505 265.5h1M505 251.5h1M505 237.5h1M505 224.5h1M505 210.5h1M505 197.5h1M505 183.5h1M505 169.5h1M505 156.5h1M518 729.5h1M518 715.5h1M518 702.5h1M518 688.5h1M518 674.5h1M518 661.5h1M518 647.5h1M518 633.5h1M518 620.5h1M518 606.5h1M518 592.5h1M518 579.5h1M518 565.5h1M518 551.5h1M518 538.5h1M518 524.5h1M518 510.5h1M518 497.5h1M518 483.5h1M518 470.5h1M518 456.5h1M518 442.5h1M518 429.5h1M518 415.5h1M518 401.5h1M518 388.5h1M518 374.5h1M518 360.5h1M518 347.5h1M518 333.5h1M518 319.5h1M518 306.5h1M518 292.5h1M518 278.5h1M518 265.5h1M518 251.5h1M518 237.5h1M518 224.5h1M518 210.5h1M518 197.5h1M518 183.5h1M518 169.5h1M518 156.5h1M532 729.5h1M532 715.5h1M532 702.5h1M532 688.5h1M532 674.5h1M532 661.5h1M532 647.5h1M532 633.5h1M532 620.5h1M532 606.5h1M532 592.5h1M532 579.5h1M532 565.5h1M532 551.5h1M532 538.5h1M532 524.5h1M532 510.5h1M532 497.5h1M532 483.5h1M532 470.5h1M532 456.5h1M532 442.5h1M532 429.5h1M532 415.5h1M532 401.5h1M532 388.5h1M532 374.5h1M532 360.5h1M532 347.5h1M532 333.5h1M532 319.5h1M532 306.5h1M532 292.5h1M532 278.5h1M532 265.5h1M532 251.5h1M532 237.5h1M532 224.5h1M532 210.5h1M532 197.5h1M532 183.5h1M532 169.5h1M532 156.5h1M546 729.5h1M546 715.5h1M546 702.5h1M546 688.5h1M546 674.5h1M546 661.5h1M546 647.5h1M546 633.5h1M546 620.5h1M546 606.5h1M546 592.5h1M546 579.5h1M546 565.5h1M546 551.5h1M546 538.5h1M546 524.5h1M546 510.5h1M546 497.5h1M546 483.5h1M546 470.5h1M546 456.5h1M546 442.5h1M546 429.5h1M546 415.5h1M546 401.5h1M546 388.5h1M546 374.5h1M546 360.5h1M546 347.5h1M546 333.5h1M546 319.5h1M546 306.5h1M546 292.5h1M546 278.5h1M546 265.5h1M546 251.5h1M546 237.5h1M546 224.5h1M546 210.5h1M546 197.5h1M546 183.5h1M546 169.5h1M546 156.5h1M559 729.5h1M559 715.5h1M559 702.5h1M559 688.5h1M559 674.5h1M559 661.5h1M559 647.5h1M559 633.5h1M559 620.5h1M559 606.5h1M559 592.5h1M559 579.5h1M559 565.5h1M559 551.5h1M559 538.5h1M559 524.5h1M559 510.5h1M559 497.5h1M559 483.5h1M559 470.5h1M559 456.5h1M559 442.5h1M559 429.5h1M559 415.5h1M559 401.5h1M559 388.5h1M559 374.5h1M559 360.5h1M559 347.5h1M559 333.5h1M559 319.5h1M559 306.5h1M559 292.5h1M559 278.5h1M559 265.5h1M559 251.5h1M559 237.5h1M559 224.5h1M559 210.5h1M559 197.5h1M559 183.5h1M559 169.5h1M559 156.5h1M573 729.5h1M573 715.5h1M573 702.5h1M573 688.5h1M573 674.5h1M573 661.5h1M573 647.5h1M573 633.5h1M573 620.5h1M573 606.5h1M573 592.5h1M573 579.5h1M573 565.5h1M573 551.5h1M573 538.5h1M573 524.5h1M573 510.5h1M573 497.5h1M573 483.5h1M573 470.5h1M573 456.5h1M573 442.5h1M573 429.5h1M573 415.5h1M573 401.5h1M573 388.5h1M573 374.5h1M573 360.5h1M573 347.5h1M573 333.5h1M573 319.5h1M573 306.5h1M573 292.5h1M573 278.5h1M573 265.5h1M573 251.5h1M573 237.5h1M573 224.5h1M573 210.5h1M573 197.5h1M573 183.5h1M573 169.5h1M573 156.5h1M587 729.5h1M587 715.5h1M587 702.5h1M587 688.5h1M587 674.5h1M587 661.5h1M587 647.5h1M587 633.5h1M587 620.5h1M587 606.5h1M587 592.5h1M587 579.5h1M587 565.5h1M587 551.5h1M587 538.5h1M587 524.5h1M587 510.5h1M587 497.5h1M587 483.5h1M587 470.5h1M587 456.5h1M587 442.5h1M587 429.5h1M587 415.5h1M587 401.5h1M587 388.5h1M587 374.5h1M587 360.5h1M587 347.5h1M587 333.5h1M587 319.5h1M587 306.5h1M587 292.5h1M587 278.5h1M587 265.5h1M587 251.5h1M587 237.5h1M587 224.5h1M587 210.5h1M587 197.5h1M587 183.5h1M587 169.5h1M587 156.5h1M600 729.5h1M600 715.5h1M600 702.5h1M600 688.5h1M600 674.5h1M600 661.5h1M600 647.5h1M600 633.5h1M600 620.5h1M600 606.5h1M600 592.5h1M600 579.5h1M600 565.5h1M600 551.5h1M600 538.5h1M600 524.5h1M600 510.5h1M600 497.5h1M600 483.5h1M600 470.5h1M600 456.5h1M600 442.5h1M600 429.5h1M600 415.5h1M600 401.5h1M600 388.5h1M600 374.5h1M600 360.5h1M600 347.5h1M600 333.5h1M600 319.5h1M600 306.5h1M600 292.5h1M600 278.5h1M600 265.5h1M600 251.5h1M600 237.5h1M600 224.5h1M600 210.5h1M600 197.5h1M600 183.5h1M600 169.5h1M600 156.5h1M614 729.5h1M614 715.5h1M614 702.5h1M614 688.5h1M614 674.5h1M614 661.5h1M614 647.5h1M614 633.5h1M614 620.5h1M614 606.5h1M614 592.5h1M614 579.5h1M614 565.5h1M614 551.5h1M614 538.5h1M614 524.5h1M614 510.5h1M614 497.5h1M614 483.5h1M614 470.5h1M614 456.5h1M614 442.5h1M614 429.5h1M614 415.5h1M614 401.5h1M614 388.5h1M614 374.5h1M614 360.5h1M614 347.5h1M614 333.5h1M614 319.5h1M614 306.5h1M614 292.5h1M614 278.5h1M614 265.5h1M614 251.5h1M614 237.5h1M614 224.5h1M614 210.5h1M614 197.5h1M614 183.5h1M614 169.5h1M614 156.5h1M628 729.5h1M628 715.5h1M628 702.5h1M628 688.5h1M628 674.5h1M628 661.5h1M628 647.5h1M628 633.5h1M628 620.5h1M628 606.5h1M628 592.5h1M628 579.5h1M628 565.5h1M628 551.5h1M628 538.5h1M628 524.5h1M628 510.5h1M628 497.5h1M628 483.5h1M628 470.5h1M628 456.5h1M628 442.5h1M628 429.5h1M628 415.5h1M628 401.5h1M628 388.5h1M628 374.5h1M628 360.5h1M628 347.5h1M628 333.5h1M628 319.5h1M628 306.5h1M628 292.5h1M628 278.5h1M628 265.5h1M628 251.5h1M628 237.5h1M628 224.5h1M628 210.5h1M628 197.5h1M628 183.5h1M628 169.5h1M628 156.5h1M641 729.5h1M641 715.5h1M641 702.5h1M641 688.5h1M641 674.5h1M641 661.5h1M641 647.5h1M641 633.5h1M641 620.5h1M641 606.5h1M641 592.5h1M641 579.5h1M641 565.5h1M641 551.5h1M641 538.5h1M641 524.5h1M641 510.5h1M641 497.5h1M641 483.5h1M641 470.5h1M641 456.5h1M641 442.5h1M641 429.5h1M641 415.5h1M641 401.5h1M641 388.5h1M641 374.5h1M641 360.5h1M641 347.5h1M641 333.5h1M641 319.5h1M641 306.5h1M641 292.5h1M641 278.5h1M641 265.5h1M641 251.5h1M641 237.5h1M641 224.5h1M641 210.5h1M641 197.5h1M641 183.5h1M641 169.5h1M641 156.5h1M655 729.5h1M655 715.5h1M655 702.5h1M655 688.5h1M655 674.5h1M655 661.5h1M655 647.5h1M655 633.5h1M655 620.5h1M655 606.5h1M655 592.5h1M655 579.5h1M655 565.5h1M655 551.5h1M655 538.5h1M655 524.5h1M655 510.5h1M655 497.5h1M655 483.5h1M655 470.5h1M655 456.5h1M655 442.5h1M655 429.5h1M655 415.5h1M655 401.5h1M655 388.5h1M655 374.5h1M655 360.5h1M655 347.5h1M655 333.5h1M655 319.5h1M655 306.5h1M655 292.5h1M655 278.5h1M655 265.5h1M655 251.5h1M655 237.5h1M655 224.5h1M655 210.5h1M655 197.5h1M655 183.5h1M655 169.5h1M655 156.5h1M669 729.5h1M669 715.5h1M669 702.5h1M669 688.5h1M669 674.5h1M669 661.5h1M669 647.5h1M669 633.5h1M669 620.5h1M669 606.5h1M669 592.5h1M669 579.5h1M669 565.5h1M669 551.5h1M669 538.5h1M669 524.5h1M669 510.5h1M669 497.5h1M669 483.5h1M669 470.5h1M669 456.5h1M669 442.5h1M669 429.5h1M669 415.5h1M669 401.5h1M669 388.5h1M669 374.5h1M669 360.5h1M669 347.5h1M669 333.5h1M669 319.5h1M669 306.5h1M669 292.5h1M669 278.5h1M669 265.5h1M669 251.5h1M669 237.5h1M669 224.5h1M669 210.5h1M669 197.5h1M669 183.5h1M669 169.5h1M669 156.5h1M682 729.5h1M682 715.5h1M682 702.5h1M682 688.5h1M682 674.5h1M682 661.5h1M682 647.5h1M682 633.5h1M682 620.5h1M682 606.5h1M682 592.5h1M682 579.5h1M682 565.5h1M682 551.5h1M682 538.5h1M682 524.5h1M682 510.5h1M682 497.5h1M682 483.5h1M682 470.5h1M682 456.5h1M682 442.5h1M682 429.5h1M682 415.5h1M682 401.5h1M682 388.5h1M682 374.5h1M682 360.5h1M682 347.5h1M682 333.5h1M682 319.5h1M682 306.5h1M682 292.5h1M682 278.5h1M682 265.5h1M682 251.5h1M682 237.5h1M682 224.5h1M682 210.5h1M682 197.5h1M682 183.5h1M682 169.5h1M682 156.5h1M696 729.5h1M696 715.5h1M696 702.5h1M696 688.5h1M696 674.5h1M696 661.5h1M696 647.5h1M696 633.5h1M696 620.5h1M696 606.5h1M696 592.5h1M696 579.5h1M696 565.5h1M696 551.5h1M696 538.5h1M696 524.5h1M696 510.5h1M696 497.5h1M696 483.5h1M696 470.5h1M696 456.5h1M696 442.5h1M696 429.5h1M696 415.5h1M696 401.5h1M696 388.5h1M696 374.5h1M696 360.5h1M696 347.5h1M696 333.5h1M696 319.5h1M696 306.5h1M696 292.5h1M696 278.5h1M696 265.5h1M696 251.5h1M696 237.5h1M696 224.5h1M696 210.5h1M696 197.5h1M696 183.5h1M696 169.5h1M696 156.5h1M710 729.5h1M710 715.5h1M710 702.5h1M710 688.5h1M710 674.5h1M710 661.5h1M710 647.5h1M710 633.5h1M710 620.5h1M710 606.5h1M710 592.5h1M710 579.5h1M710 565.5h1M710 551.5h1M710 538.5h1M710 524.5h1M710 510.5h1M710 497.5h1M710 483.5h1M710 470.5h1M710 456.5h1M710 442.5h1M710 429.5h1M710 415.5h1M710 401.5h1M710 388.5h1M710 374.5h1M710 360.5h1M710 347.5h1M710 333.5h1M710 319.5h1M710 306.5h1M710 292.5h1M710 278.5h1M710 265.5h1M710 251.5h1M710 237.5h1M710 224.5h1M710 210.5h1M710 197.5h1M710 183.5h1M710 169.5h1M710 156.5h1M723 729.5h1M723 715.5h1M723 702.5h1M723 688.5h1M723 674.5h1M723 661.5h1M723 647.5h1M723 633.5h1M723 620.5h1M723 606.5h1M723 592.5h1M723 579.5h1M723 565.5h1M723 551.5h1M723 538.5h1M723 524.5h1M723 510.5h1M723 497.5h1M723 483.5h1M723 470.5h1M723 456.5h1M723 442.5h1M723 429.5h1M723 415.5h1M723 401.5h1M723 388.5h1M723 374.5h1M723 360.5h1M723 347.5h1M723 333.5h1M723 319.5h1M723 306.5h1M723 292.5h1M723 278.5h1M723 265.5h1M723 251.5h1M723 237.5h1M723 224.5h1M723 210.5h1M723 197.5h1M723 183.5h1M723 169.5h1M723 156.5h1M737 729.5h1M737 715.5h1M737 702.5h1M737 688.5h1M737 674.5h1M737 661.5h1M737 647.5h1M737 633.5h1M737 620.5h1M737 606.5h1M737 592.5h1M737 579.5h1M737 565.5h1M737 551.5h1M737 538.5h1M737 524.5h1M737 510.5h1M737 497.5h1M737 483.5h1M737 470.5h1M737 456.5h1M737 442.5h1M737 429.5h1M737 415.5h1M737 401.5h1M737 388.5h1M737 374.5h1M737 360.5h1M737 347.5h1M737 333.5h1M737 319.5h1M737 306.5h1M737 292.5h1M737 278.5h1M737 265.5h1M737 251.5h1M737 237.5h1M737 224.5h1M737 210.5h1M737 197.5h1M737 183.5h1M737 169.5h1M737 156.5h1M750 729.5h1M750 715.5h1M750 702.5h1M750 688.5h1M750 674.5h1M750 661.5h1M750 647.5h1M750 633.5h1M750 620.5h1M750 606.5h1M750 592.5h1M750 579.5h1M750 565.5h1M750 551.5h1M750 538.5h1M750 524.5h1M750 510.5h1M750 497.5h1M750 483.5h1M750 470.5h1M750 456.5h1M750 442.5h1M750 429.5h1M750 415.5h1M750 401.5h1M750 388.5h1M750 374.5h1M750 360.5h1M750 347.5h1M750 333.5h1M750 319.5h1M750 306.5h1M750 292.5h1M750 278.5h1M750 265.5h1M750 251.5h1M750 237.5h1M750 224.5h1M750 210.5h1M750 197.5h1M750 183.5h1M750 169.5h1M750 156.5h1M764 729.5h1M764 715.5h1M764 702.5h1M764 688.5h1M764 674.5h1M764 661.5h1M764 647.5h1M764 633.5h1M764 620.5h1M764 606.5h1M764 592.5h1M764 579.5h1M764 565.5h1M764 551.5h1M764 538.5h1M764 524.5h1M764 510.5h1M764 497.5h1M764 483.5h1M764 470.5h1M764 456.5h1M764 442.5h1M764 429.5h1M764 415.5h1M764 401.5h1M764 388.5h1M764 374.5h1M764 360.5h1M764 347.5h1M764 333.5h1M764 319.5h1M764 306.5h1M764 292.5h1M764 278.5h1M764 265.5h1M764 251.5h1M764 237.5h1M764 224.5h1M764 210.5h1M764 197.5h1M764 183.5h1M764 169.5h1M764 156.5h1M778 729.5h1M778 715.5h1M778 702.5h1M778 688.5h1M778 674.5h1M778 661.5h1M778 647.5h1M778 633.5h1M778 620.5h1M778 606.5h1M778 592.5h1M778 579.5h1M778 565.5h1M778 551.5h1M778 538.5h1M778 524.5h1M778 510.5h1M778 497.5h1M778 483.5h1M778 470.5h1M778 456.5h1M778 442.5h1M778 429.5h1M778 415.5h1M778 401.5h1M778 388.5h1M778 374.5h1M778 360.5h1M778 347.5h1M778 333.5h1M778 319.5h1M778 306.5h1M778 292.5h1M778 278.5h1M778 265.5h1M778 251.5h1M778 237.5h1M778 224.5h1M778 210.5h1M778 197.5h1M778 183.5h1M778 169.5h1M778 156.5h1M791 729.5h1M791 715.5h1M791 702.5h1M791 688.5h1M791 674.5h1M791 661.5h1M791 647.5h1M791 633.5h1M791 620.5h1M791 606.5h1M791 592.5h1M791 579.5h1M791 565.5h1M791 551.5h1M791 538.5h1M791 524.5h1M791 510.5h1M791 497.5h1M791 483.5h1M791 470.5h1M791 456.5h1M791 442.5h1M791 429.5h1M791 415.5h1M791 401.5h1M791 388.5h1M791 374.5h1M791 360.5h1M791 347.5h1M791 333.5h1M791 319.5h1M791 306.5h1M791 292.5h1M791 278.5h1M791 265.5h1M791 251.5h1M791 237.5h1M791 224.5h1M791 210.5h1M791 197.5h1M791 183.5h1M791 169.5h1M791 156.5h1M805 729.5h1M805 715.5h1M805 702.5h1M805 688.5h1M805 674.5h1M805 661.5h1M805 647.5h1M805 633.5h1M805 620.5h1M805 606.5h1M805 592.5h1M805 579.5h1M805 565.5h1M805 551.5h1M805 538.5h1M805 524.5h1M805 510.5h1M805 497.5h1M805 483.5h1M805 470.5h1M805 456.5h1M805 442.5h1M805 429.5h1M805 415.5h1M805 401.5h1M805 388.5h1M805 374.5h1M805 360.5h1M805 347.5h1M805 333.5h1M805 319.5h1M805 306.5h1M805 292.5h1M805 278.5h1M805 265.5h1M805 251.5h1M805 237.5h1M805 224.5h1M805 210.5h1M805 197.5h1M805 183.5h1M805 169.5h1M805 156.5h1M819 729.5h1M819 715.5h1M819 702.5h1M819 688.5h1M819 674.5h1M819 661.5h1M819 647.5h1M819 633.5h1M819 620.5h1M819 606.5h1M819 592.5h1M819 579.5h1M819 565.5h1M819 551.5h1M819 538.5h1M819 524.5h1M819 510.5h1M819 497.5h1M819 483.5h1M819 470.5h1M819 456.5h1M819 442.5h1M819 429.5h1M819 415.5h1M819 401.5h1M819 388.5h1M819 374.5h1M819 360.5h1M819 347.5h1M819 333.5h1M819 319.5h1M819 306.5h1M819 292.5h1M819 278.5h1M819 265.5h1M819 251.5h1M819 237.5h1M819 224.5h1M819 210.5h1M819 197.5h1M819 183.5h1M819 169.5h1M819 156.5h1M832 729.5h1M832 715.5h1M832 702.5h1M832 688.5h1M832 674.5h1M832 661.5h1M832 647.5h1M832 633.5h1M832 620.5h1M832 606.5h1M832 592.5h1M832 579.5h1M832 565.5h1M832 551.5h1M832 538.5h1M832 524.5h1M832 510.5h1M832 497.5h1M832 483.5h1M832 470.5h1M832 456.5h1M832 442.5h1M832 429.5h1M832 415.5h1M832 401.5h1M832 388.5h1M832 374.5h1M832 360.5h1M832 347.5h1M832 333.5h1M832 319.5h1M832 306.5h1M832 292.5h1M832 278.5h1M832 265.5h1M832 251.5h1M832 237.5h1M832 224.5h1M832 210.5h1M832 197.5h1M832 183.5h1M832 169.5h1M832 156.5h1M846 729.5h1M846 715.5h1M846 702.5h1M846 688.5h1M846 674.5h1M846 661.5h1M846 647.5h1M846 633.5h1M846 620.5h1M846 606.5h1M846 592.5h1M846 579.5h1M846 565.5h1M846 551.5h1M846 538.5h1M846 524.5h1M846 510.5h1M846 497.5h1M846 483.5h1M846 470.5h1M846 456.5h1M846 442.5h1M846 429.5h1M846 415.5h1M846 401.5h1M846 388.5h1M846 374.5h1M846 360.5h1M846 347.5h1M846 333.5h1M846 319.5h1M846 306.5h1M846 292.5h1M846 278.5h1M846 265.5h1M846 251.5h1M846 237.5h1M846 224.5h1M846 210.5h1M846 197.5h1M846 183.5h1M846 169.5h1M846 156.5h1M860 729.5h1M860 715.5h1M860 702.5h1M860 688.5h1M860 674.5h1M860 661.5h1M860 647.5h1M860 633.5h1M860 620.5h1M860 606.5h1M860 592.5h1M860 579.5h1M860 565.5h1M860 551.5h1M860 538.5h1M860 524.5h1M860 510.5h1M860 497.5h1M860 483.5h1M860 470.5h1M860 456.5h1M860 442.5h1M860 429.5h1M860 415.5h1M860 401.5h1M860 388.5h1M860 374.5h1M860 360.5h1M860 347.5h1M860 333.5h1M860 319.5h1M860 306.5h1M860 292.5h1M860 278.5h1M860 265.5h1M860 251.5h1M860 237.5h1M860 224.5h1M860 210.5h1M860 197.5h1M860 183.5h1M860 169.5h1M860 156.5h1M873 729.5h1M873 715.5h1M873 702.5h1M873 688.5h1M873 674.5h1M873 661.5h1M873 647.5h1M873 633.5h1M873 620.5h1M873 606.5h1M873 592.5h1M873 579.5h1M873 565.5h1M873 551.5h1M873 538.5h1M873 524.5h1M873 510.5h1M873 497.5h1M873 483.5h1M873 470.5h1M873 456.5h1M873 442.5h1M873 429.5h1M873 415.5h1M873 401.5h1M873 388.5h1M873 374.5h1M873 360.5h1M873 347.5h1M873 333.5h1M873 319.5h1M873 306.5h1M873 292.5h1M873 278.5h1M873 265.5h1M873 251.5h1M873 237.5h1M873 224.5h1M873 210.5h1M873 197.5h1M873 183.5h1M873 169.5h1M873 156.5h1M887 729.5h1M887 715.5h1M887 702.5h1M887 688.5h1M887 674.5h1M887 661.5h1M887 647.5h1M887 633.5h1M887 620.5h1M887 606.5h1M887 592.5h1M887 579.5h1M887 565.5h1M887 551.5h1M887 538.5h1M887 524.5h1M887 510.5h1M887 497.5h1M887 483.5h1M887 470.5h1M887 456.5h1M887 442.5h1M887 429.5h1M887 415.5h1M887 401.5h1M887 388.5h1M887 374.5h1M887 360.5h1M887 347.5h1M887 333.5h1M887 319.5h1M887 306.5h1M887 292.5h1M887 278.5h1M887 265.5h1M887 251.5h1M887 237.5h1M887 224.5h1M887 210.5h1M887 197.5h1M887 183.5h1M887 169.5h1M887 156.5h1M901 729.5h1M901 715.5h1M901 702.5h1M901 688.5h1M901 674.5h1M901 661.5h1M901 647.5h1M901 633.5h1M901 620.5h1M901 606.5h1M901 592.5h1M901 579.5h1M901 565.5h1M901 551.5h1M901 538.5h1M901 524.5h1M901 510.5h1M901 497.5h1M901 483.5h1M901 470.5h1M901 456.5h1M901 442.5h1M901 429.5h1M901 415.5h1M901 401.5h1M901 388.5h1M901 374.5h1M901 360.5h1M901 347.5h1M901 333.5h1M901 319.5h1M901 306.5h1M901 292.5h1M901 278.5h1M901 265.5h1M901 251.5h1M901 237.5h1M901 224.5h1M901 210.5h1M901 197.5h1M901 183.5h1M901 169.5h1M901 156.5h1M914 729.5h1M914 715.5h1M914 702.5h1M914 688.5h1M914 674.5h1M914 661.5h1M914 647.5h1M914 633.5h1M914 620.5h1M914 606.5h1M914 592.5h1M914 579.5h1M914 565.5h1M914 551.5h1M914 538.5h1M914 524.5h1M914 510.5h1M914 497.5h1M914 483.5h1M914 470.5h1M914 456.5h1M914 442.5h1M914 429.5h1M914 415.5h1M914 401.5h1M914 388.5h1M914 374.5h1M914 360.5h1M914 347.5h1M914 333.5h1M914 319.5h1M914 306.5h1M914 292.5h1M914 278.5h1M914 265.5h1M914 251.5h1M914 237.5h1M914 224.5h1M914 210.5h1M914 197.5h1M914 183.5h1M914 169.5h1M914 156.5h1M928 729.5h1M928 715.5h1M928 702.5h1M928 688.5h1M928 674.5h1M928 661.5h1M928 647.5h1M928 633.5h1M928 620.5h1M928 606.5h1M928 592.5h1M928 579.5h1M928 565.5h1M928 551.5h1M928 538.5h1M928 524.5h1M928 510.5h1M928 497.5h1M928 483.5h1M928 470.5h1M928 456.5h1M928 442.5h1M928 429.5h1M928 415.5h1M928 401.5h1M928 388.5h1M928 374.5h1M928 360.5h1M928 347.5h1M928 333.5h1M928 319.5h1M928 306.5h1M928 292.5h1M928 278.5h1M928 265.5h1M928 251.5h1M928 237.5h1M928 224.5h1M928 210.5h1M928 197.5h1M928 183.5h1M928 169.5h1M928 156.5h1M942 729.5h1M942 715.5h1M942 702.5h1M942 688.5h1M942 674.5h1M942 661.5h1M942 647.5h1M942 633.5h1M942 620.5h1M942 606.5h1M942 592.5h1M942 579.5h1M942 565.5h1M942 551.5h1M942 538.5h1M942 524.5h1M942 510.5h1M942 497.5h1M942 483.5h1M942 470.5h1M942 456.5h1M942 442.5h1M942 429.5h1M942 415.5h1M942 401.5h1M942 388.5h1M942 374.5h1M942 360.5h1M942 347.5h1M942 333.5h1M942 319.5h1M942 306.5h1M942 292.5h1M942 278.5h1M942 265.5h1M942 251.5h1M942 237.5h1M942 224.5h1M942 210.5h1M942 197.5h1M942 183.5h1M942 169.5h1M942 156.5h1M955 729.5h1M955 715.5h1M955 702.5h1M955 688.5h1M955 674.5h1M955 661.5h1M955 647.5h1M955 633.5h1M955 620.5h1M955 606.5h1M955 592.5h1M955 579.5h1M955 565.5h1M955 551.5h1M955 538.5h1M955 524.5h1M955 510.5h1M955 497.5h1M955 483.5h1M955 470.5h1M955 456.5h1M955 442.5h1M955 429.5h1M955 415.5h1M955 401.5h1M955 388.5h1M955 374.5h1M955 360.5h1M955 347.5h1M955 333.5h1M955 319.5h1M955 306.5h1M955 292.5h1M955 278.5h1M955 265.5h1M955 251.5h1M955 237.5h1M955 224.5h1M955 210.5h1M955 197.5h1M955 183.5h1M955 169.5h1M955 156.5h1M969 729.5h1M969 715.5h1M969 702.5h1M969 688.5h1M969 674.5h1M969 661.5h1M969 647.5h1M969 633.5h1M969 620.5h1M969 606.5h1M969 592.5h1M969 579.5h1M969 565.5h1M969 551.5h1M969 538.5h1M969 524.5h1M969 510.5h1M969 497.5h1M969 483.5h1M969 470.5h1M969 456.5h1M969 442.5h1M969 429.5h1M969 415.5h1M969 401.5h1M969 388.5h1M969 374.5h1M969 360.5h1M969 347.5h1M969 333.5h1M969 319.5h1M969 306.5h1M969 292.5h1M969 278.5h1M969 265.5h1M969 251.5h1M969 237.5h1M969 224.5h1M969 210.5h1M969 197.5h1M969 183.5h1M969 169.5h1M969 156.5h1M983 729.5h1M983 715.5h1M983 702.5h1M983 688.5h1M983 674.5h1M983 661.5h1M983 647.5h1M983 633.5h1M983 620.5h1M983 606.5h1M983 592.5h1M983 579.5h1M983 565.5h1M983 551.5h1M983 538.5h1M983 524.5h1M983 510.5h1M983 497.5h1M983 483.5h1M983 470.5h1M983 456.5h1M983 442.5h1M983 429.5h1M983 415.5h1M983 401.5h1M983 388.5h1M983 374.5h1M983 360.5h1M983 347.5h1M983 333.5h1M983 319.5h1M983 306.5h1M983 292.5h1M983 278.5h1M983 265.5h1M983 251.5h1M983 237.5h1M983 224.5h1M983 210.5h1M983 197.5h1M983 183.5h1M983 169.5h1M983 156.5h1M996 729.5h1M996 715.5h1M996 702.5h1M996 688.5h1M996 674.5h1M996 661.5h1M996 647.5h1M996 633.5h1M996 620.5h1M996 606.5h1M996 592.5h1M996 579.5h1M996 565.5h1M996 551.5h1M996 538.5h1M996 524.5h1M996 510.5h1M996 497.5h1M996 483.5h1M996 470.5h1M996 456.5h1M996 442.5h1M996 429.5h1M996 415.5h1M996 401.5h1M996 388.5h1M996 374.5h1M996 360.5h1M996 347.5h1M996 333.5h1M996 319.5h1M996 306.5h1M996 292.5h1M996 278.5h1M996 265.5h1M996 251.5h1M996 237.5h1M996 224.5h1M996 210.5h1M996 197.5h1M996 183.5h1M996 169.5h1M996 156.5h1M1010 729.5h1M1010 715.5h1M1010 702.5h1M1010 688.5h1M1010 674.5h1M1010 661.5h1M1010 647.5h1M1010 633.5h1M1010 620.5h1M1010 606.5h1M1010 592.5h1M1010 579.5h1M1010 565.5h1M1010 551.5h1M1010 538.5h1M1010 524.5h1M1010 510.5h1M1010 497.5h1M1010 483.5h1M1010 470.5h1M1010 456.5h1M1010 442.5h1M1010 429.5h1M1010 415.5h1M1010 401.5h1M1010 388.5h1M1010 374.5h1M1010 360.5h1M1010 347.5h1M1010 333.5h1M1010 319.5h1M1010 306.5h1M1010 292.5h1M1010 278.5h1M1010 265.5h1M1010 251.5h1M1010 237.5h1M1010 224.5h1M1010 210.5h1M1010 197.5h1M1010 183.5h1M1010 169.5h1M1010 156.5h1M1023 729.5h1M1023 715.5h1M1023 702.5h1M1023 688.5h1M1023 674.5h1M1023 661.5h1M1023 647.5h1M1023 633.5h1M1023 620.5h1M1023 606.5h1M1023 592.5h1M1023 579.5h1M1023 565.5h1M1023 551.5h1M1023 538.5h1M1023 524.5h1M1023 510.5h1M1023 497.5h1M1023 483.5h1M1023 470.5h1M1023 456.5h1M1023 442.5h1M1023 429.5h1M1023 415.5h1M1023 401.5h1M1023 388.5h1M1023 374.5h1M1023 360.5h1M1023 347.5h1M1023 333.5h1M1023 319.5h1M1023 306.5h1M1023 292.5h1M1023 278.5h1M1023 265.5h1M1023 251.5h1M1023 237.5h1M1023 224.5h1M1023 210.5h1M1023 197.5h1M1023 183.5h1M1023 169.5h1M1023 156.5h1M1037 729.5h1M1037 715.5h1M1037 702.5h1M1037 688.5h1M1037 674.5h1M1037 661.5h1M1037 647.5h1M1037 633.5h1M1037 620.5h1M1037 606.5h1M1037 592.5h1M1037 579.5h1M1037 565.5h1M1037 551.5h1M1037 538.5h1M1037 524.5h1M1037 510.5h1M1037 497.5h1M1037 483.5h1M1037 470.5h1M1037 456.5h1M1037 442.5h1M1037 429.5h1M1037 415.5h1M1037 401.5h1M1037 388.5h1M1037 374.5h1M1037 360.5h1M1037 347.5h1M1037 333.5h1M1037 319.5h1M1037 306.5h1M1037 292.5h1M1037 278.5h1M1037 265.5h1M1037 251.5h1M1037 237.5h1M1037 224.5h1M1037 210.5h1M1037 197.5h1M1037 183.5h1M1037 169.5h1M1037 156.5h1M1051 729.5h1M1051 715.5h1M1051 702.5h1M1051 688.5h1M1051 674.5h1M1051 661.5h1M1051 647.5h1M1051 633.5h1M1051 620.5h1M1051 606.5h1M1051 592.5h1M1051 579.5h1M1051 565.5h1M1051 551.5h1M1051 538.5h1M1051 524.5h1M1051 510.5h1M1051 497.5h1M1051 483.5h1M1051 470.5h1M1051 456.5h1M1051 442.5h1M1051 429.5h1M1051 415.5h1M1051 401.5h1M1051 388.5h1M1051 374.5h1M1051 360.5h1M1051 347.5h1M1051 333.5h1M1051 319.5h1M1051 306.5h1M1051 292.5h1M1051 278.5h1M1051 265.5h1M1051 251.5h1M1051 237.5h1M1051 224.5h1M1051 210.5h1M1051 197.5h1M1051 183.5h1M1051 169.5h1M1051 156.5h1M1064 729.5h1M1064 715.5h1M1064 702.5h1M1064 688.5h1M1064 674.5h1M1064 661.5h1M1064 647.5h1M1064 633.5h1M1064 620.5h1M1064 606.5h1M1064 592.5h1M1064 579.5h1M1064 565.5h1M1064 551.5h1M1064 538.5h1M1064 524.5h1M1064 510.5h1M1064 497.5h1M1064 483.5h1M1064 470.5h1M1064 456.5h1M1064 442.5h1M1064 429.5h1M1064 415.5h1M1064 401.5h1M1064 388.5h1M1064 374.5h1M1064 360.5h1M1064 347.5h1M1064 333.5h1M1064 319.5h1M1064 306.5h1M1064 292.5h1M1064 278.5h1M1064 265.5h1M1064 251.5h1M1064 237.5h1M1064 224.5h1M1064 210.5h1M1064 197.5h1M1064 183.5h1M1064 169.5h1M1064 156.5h1M1078 729.5h1M1078 715.5h1M1078 702.5h1M1078 688.5h1M1078 674.5h1M1078 661.5h1M1078 647.5h1M1078 633.5h1M1078 620.5h1M1078 606.5h1M1078 592.5h1M1078 579.5h1M1078 565.5h1M1078 551.5h1M1078 538.5h1M1078 524.5h1M1078 510.5h1M1078 497.5h1M1078 483.5h1M1078 470.5h1M1078 456.5h1M1078 442.5h1M1078 429.5h1M1078 415.5h1M1078 401.5h1M1078 388.5h1M1078 374.5h1M1078 360.5h1M1078 347.5h1M1078 333.5h1M1078 319.5h1M1078 306.5h1M1078 292.5h1M1078 278.5h1M1078 265.5h1M1078 251.5h1M1078 237.5h1M1078 224.5h1M1078 210.5h1M1078 197.5h1M1078 183.5h1M1078 169.5h1M1078 156.5h1M1092 729.5h1M1092 715.5h1M1092 702.5h1M1092 688.5h1M1092 674.5h1M1092 661.5h1M1092 647.5h1M1092 633.5h1M1092 620.5h1M1092 606.5h1M1092 592.5h1M1092 579.5h1M1092 565.5h1M1092 551.5h1M1092 538.5h1M1092 524.5h1M1092 510.5h1M1092 497.5h1M1092 483.5h1M1092 470.5h1M1092 456.5h1M1092 442.5h1M1092 429.5h1M1092 415.5h1M1092 401.5h1M1092 388.5h1M1092 374.5h1M1092 360.5h1M1092 347.5h1M1092 333.5h1M1092 319.5h1M1092 306.5h1M1092 292.5h1M1092 278.5h1M1092 265.5h1M1092 251.5h1M1092 237.5h1M1092 224.5h1M1092 210.5h1M1092 197.5h1M1092 183.5h1M1092 169.5h1M1092 156.5h1M1105 729.5h1M1105 715.5h1M1105 702.5h1M1105 688.5h1M1105 674.5h1M1105 661.5h1M1105 647.5h1M1105 633.5h1M1105 620.5h1M1105 606.5h1M1105 592.5h1M1105 579.5h1M1105 565.5h1M1105 551.5h1M1105 538.5h1M1105 524.5h1M1105 510.5h1M1105 497.5h1M1105 483.5h1M1105 470.5h1M1105 456.5h1M1105 442.5h1M1105 429.5h1M1105 415.5h1M1105 401.5h1M1105 388.5h1M1105 374.5h1M1105 360.5h1M1105 347.5h1M1105 333.5h1M1105 319.5h1M1105 306.5h1M1105 292.5h1M1105 278.5h1M1105 265.5h1M1105 251.5h1M1105 237.5h1M1105 224.5h1M1105 210.5h1M1105 197.5h1M1105 183.5h1M1105 169.5h1M1105 156.5h1M1119 729.5h1M1119 715.5h1M1119 702.5h1M1119 688.5h1M1119 674.5h1M1119 661.5h1M1119 647.5h1M1119 633.5h1M1119 620.5h1M1119 606.5h1M1119 592.5h1M1119 579.5h1M1119 565.5h1M1119 551.5h1M1119 538.5h1M1119 524.5h1M1119 510.5h1M1119 497.5h1M1119 483.5h1M1119 470.5h1M1119 456.5h1M1119 442.5h1M1119 429.5h1M1119 415.5h1M1119 401.5h1M1119 388.5h1M1119 374.5h1M1119 360.5h1M1119 347.5h1M1119 333.5h1M1119 319.5h1M1119 306.5h1M1119 292.5h1M1119 278.5h1M1119 265.5h1M1119 251.5h1M1119 237.5h1M1119 224.5h1M1119 210.5h1M1119 197.5h1M1119 183.5h1M1119 169.5h1M1119 156.5h1M1133 729.5h1M1133 715.5h1M1133 702.5h1M1133 688.5h1M1133 674.5h1M1133 661.5h1M1133 647.5h1M1133 633.5h1M1133 620.5h1M1133 606.5h1M1133 592.5h1M1133 579.5h1M1133 565.5h1M1133 551.5h1M1133 538.5h1M1133 524.5h1M1133 510.5h1M1133 497.5h1M1133 483.5h1M1133 470.5h1M1133 456.5h1M1133 442.5h1M1133 429.5h1M1133 415.5h1M1133 401.5h1M1133 388.5h1M1133 374.5h1M1133 360.5h1M1133 347.5h1M1133 333.5h1M1133 319.5h1M1133 306.5h1M1133 292.5h1M1133 278.5h1M1133 265.5h1M1133 251.5h1M1133 237.5h1M1133 224.5h1M1133 210.5h1M1133 197.5h1M1133 183.5h1M1133 169.5h1M1133 156.5h1" stroke="#303030" stroke-width="1" fill="none"/>
<g stroke="#0091ff" stroke-width="2.2" fill="none" stroke-linecap="round">
<path d="M143.9 150V197.5M95 183.2H158M205.1 150V177M314.4 150V177M375.6 150V197.5"/>
<path d="M96.4 517V661M260 558V593M614.5 517V593M778 517V661"/>
<path d="M110 579.1H246M628 579.1H764M110 647.1H764"/>
<path d="M764 428.6H861M784.5 510.6H861M846.6 442V497"/>
</g>
<path d="M96 579.1L124 573.1V585.1ZM260 579.1L232 573.1V585.1ZM614.5 579.1L642.5 573.1V585.1ZM778 579.1L750 573.1V585.1ZM96 647.1L124 641.1V653.1ZM778 647.1L750 641.1V653.1ZM846.6 428.6L840.6 456.6H852.6ZM846.6 510.6L840.6 482.6H852.6Z" fill="#0091ff"/>
<path d="M259.8 137.7V552" stroke="#ff0000" stroke-width="1.8" fill="none" stroke-dasharray="57.8 9.9 12.8 9.8"/>
<path d="M205.1 165.8V510M314.4 165.8V510" stroke="#fff" stroke-width="1.8" fill="none" stroke-dasharray="23.5 10.3"/>
<rect x="200" y="160" width="120" height="22" fill="#000"/>
<path d="M205.1 155V177M314.4 155V177" stroke="#0091ff" stroke-width="2.2" stroke-linecap="round"/>
<path d="M259.8 155V183" stroke="#ff0000" stroke-width="2"/>
<g stroke="#fff" stroke-width="3.3" fill="none" stroke-linejoin="miter" stroke-linecap="square">
<path d="M143.8 428V203.8L164.2 183.3H355.3L375.6 203.8V428M143.8 203.8H375.6"/>
<path d="M96.6 449.5L116.7 428.9H758.2L778 449.5V510.7H96.6V449.5H778"/>
<path d="M606.2 429.4L614.5 449.5V510.7" stroke-linecap="butt"/>
</g>
<text transform="translate(157.7 575)" font-family="IPAGothic, Noto Sans CJK JP, Liberation Sans, sans-serif" font-size="40" fill="#0091ff">1</text>
<text transform="translate(169.9 575) scale(1.3 1)" font-family="IPAGothic, Noto Sans CJK JP, Liberation Sans, sans-serif" font-size="40" fill="#0091ff">2</text>
<text transform="translate(676.2 575)" font-family="IPAGothic, Noto Sans CJK JP, Liberation Sans, sans-serif" font-size="40" fill="#0091ff">1</text>
<text transform="translate(688.1999999999999 575) scale(1.3 1)" font-family="IPAGothic, Noto Sans CJK JP, Liberation Sans, sans-serif" font-size="40" fill="#0091ff">2</text>
<text transform="translate(416.9 642.8)" font-family="IPAGothic, Noto Sans CJK JP, Liberation Sans, sans-serif" font-size="40" fill="#0091ff">5</text>
<text transform="translate(437.8 642.8)" font-family="IPAGothic, Noto Sans CJK JP, Liberation Sans, sans-serif" font-size="40" fill="#0091ff">0</text>
<text transform="translate(842.4 479) rotate(-90)" font-family="IPAGothic, Noto Sans CJK JP, Liberation Sans, sans-serif" font-size="40" fill="#0091ff">6</text>
<defs><radialGradient id="halo" cx="0.5" cy="0.5" r="0.5"><stop offset="0" stop-color="#a6c9ec" stop-opacity="0"/><stop offset="0.75" stop-color="#a6c9ec" stop-opacity="0"/><stop offset="0.86" stop-color="#a6c9ec" stop-opacity="0.24"/><stop offset="0.93" stop-color="#a6c9ec" stop-opacity="0.53"/><stop offset="0.975" stop-color="#a0c2e4" stop-opacity="0.5"/><stop offset="1" stop-color="#a0c2e4" stop-opacity="0"/></radialGradient></defs>
<circle cx="696" cy="469" r="40.2" fill="url(#halo)"/>
<path d="M695.5 468.8V490.9L700.5 486.3L704.7 495.8L708.6 494L704.4 484.7H711.1Z" fill="#fff" stroke="#fff" stroke-width="2.2" stroke-linejoin="round"/>
<path d="M695.5 468.8V490.9L700.5 486.3L704.7 495.8L708.6 494L704.4 484.7H711.1Z" fill="#fff" stroke="#222" stroke-width="0.8" stroke-linejoin="miter"/>
</svg>
<div id="hruler">
<svg width="1081" height="23" style="left:0;top:0"><path d="M23.5 16.5V23M37.5 20.5V23M50.5 16.5V23M64.5 20.5V23M78.5 16.5V23M91.5 20.5V23M105.5 16.5V23M118.5 20.5V23M132.5 16.5V23M146.5 20.5V23M159.5 16.5V23M173.5 20.5V23M187.5 16.5V23M200.5 20.5V23M214.5 16.5V23M228.5 20.5V23M241.5 16.5V23M255.5 20.5V23M269.5 16.5V23M282.5 20.5V23M296.5 16.5V23M310.5 20.5V23M323.5 16.5V23M337.5 20.5V23M351.5 16.5V23M364.5 20.5V23M378.5 16.5V23M391.5 20.5V23M405.5 16.5V23M419.5 20.5V23M432.5 16.5V23M446.5 20.5V23M460.5 16.5V23M473.5 20.5V23M487.5 16.5V23M501.5 20.5V23M514.5 16.5V23M528.5 20.5V23M542.5 16.5V23M555.5 20.5V23M569.5 16.5V23M583.5 20.5V23M596.5 16.5V23M610.5 20.5V23M624.5 16.5V23M637.5 20.5V23M651.5 16.5V23M664.5 20.5V23M678.5 16.5V23M692.5 20.5V23M705.5 16.5V23M719.5 20.5V23M733.5 16.5V23M746.5 20.5V23M760.5 16.5V23M774.5 20.5V23M787.5 16.5V23M801.5 20.5V23M815.5 16.5V23M828.5 20.5V23M842.5 16.5V23M856.5 20.5V23M869.5 16.5V23M883.5 20.5V23M897.5 16.5V23M910.5 20.5V23M924.5 16.5V23M937.5 20.5V23M951.5 16.5V23M965.5 20.5V23M978.5 16.5V23M992.5 20.5V23M1006.5 16.5V23M1019.5 20.5V23M1033.5 16.5V23M1047.5 20.5V23M1060.5 16.5V23" stroke="#4e4e4e" stroke-width="1" fill="none"/>
<path d="M618.1 13.2h11.2l-5.6 5.8z" fill="#000"/></svg>
<div class="abs" style="left:23px;top:0;width:1058px;height:23px;overflow:hidden">
<span class="rl" style="left:-12.6px;top:0.5px;width:30px;text-align:center">0</span>
<span class="rl" style="left:12.4px;top:0.5px;width:30px;text-align:center">12</span>
<span class="rl" style="left:40.4px;top:0.5px;width:30px;text-align:center">14</span>
<span class="rl" style="left:67.4px;top:0.5px;width:30px;text-align:center">16</span>
<span class="rl" style="left:94.4px;top:0.5px;width:30px;text-align:center">18</span>
<span class="rl" style="left:121.4px;top:0.5px;width:30px;text-align:center">20</span>
<span class="rl" style="left:149.4px;top:0.5px;width:30px;text-align:center">22</span>
<span class="rl" style="left:176.4px;top:0.5px;width:30px;text-align:center">24</span>
<span class="rl" style="left:203.4px;top:0.5px;width:30px;text-align:center">26</span>
<span class="rl" style="left:231.4px;top:0.5px;width:30px;text-align:center">28</span>
<span class="rl" style="left:258.4px;top:0.5px;width:30px;text-align:center">30</span>
<span class="rl" style="left:285.4px;top:0.5px;width:30px;text-align:center">32</span>
<span class="rl" style="left:313.4px;top:0.5px;width:30px;text-align:center">34</span>
<span class="rl" style="left:340.4px;top:0.5px;width:30px;text-align:center">36</span>
<span class="rl" style="left:367.4px;top:0.5px;width:30px;text-align:center">38</span>
<span class="rl" style="left:394.4px;top:0.5px;width:30px;text-align:center">40</span>
<span class="rl" style="left:422.4px;top:0.5px;width:30px;text-align:center">42</span>
<span class="rl" style="left:449.4px;top:0.5px;width:30px;text-align:center">44</span>
<span class="rl" style="left:476.4px;top:0.5px;width:30px;text-align:center">46</span>
<span class="rl" style="left:504.4px;top:0.5px;width:30px;text-align:center">48</span>
<span class="rl" style="left:531.4px;top:0.5px;width:30px;text-align:center">50</span>
<span class="rl" style="left:558.4px;top:0.5px;width:30px;text-align:center">52</span>
<span class="rl" style="left:586.4px;top:0.5px;width:30px;text-align:center">54</span>
<span class="rl" style="left:613.4px;top:0.5px;width:30px;text-align:center">56</span>
<span class="rl" style="left:640.4px;top:0.5px;width:30px;text-align:center">58</span>
<span class="rl" style="left:667.4px;top:0.5px;width:30px;text-align:center">60</span>
<span class="rl" style="left:695.4px;top:0.5px;width:30px;text-align:center">62</span>
<span class="rl" style="left:722.4px;top:0.5px;width:30px;text-align:center">64</span>
<span class="rl" style="left:749.4px;top:0.5px;width:30px;text-align:center">66</span>
<span class="rl" style="left:777.4px;top:0.5px;width:30px;text-align:center">68</span>
<span class="rl" style="left:804.4px;top:0.5px;width:30px;text-align:center">70</span>
<span class="rl" style="left:831.4px;top:0.5px;width:30px;text-align:center">72</span>
<span class="rl" style="left:859.4px;top:0.5px;width:30px;text-align:center">74</span>
<span class="rl" style="left:886.4px;top:0.5px;width:30px;text-align:center">76</span>
<span class="rl" style="left:913.4px;top:0.5px;width:30px;text-align:center">78</span>
<span class="rl" style="left:940.4px;top:0.5px;width:30px;text-align:center">80</span>
<span class="rl" style="left:968.4px;top:0.5px;width:30px;text-align:center">82</span>
<span class="rl" style="left:995.4px;top:0.5px;width:30px;text-align:center">84</span>
<span class="rl" style="left:1022.4px;top:0.5px;width:30px;text-align:center">86</span>
</div></div>
<div id="vruler">
<svg width="23" height="593" style="left:0;top:0"><path d="M16.5 574.5H23M20.5 560.5H23M16.5 546.5H23M20.5 533.5H23M16.5 519.5H23M20.5 505.5H23M16.5 492.5H23M20.5 478.5H23M16.5 464.5H23M20.5 451.5H23M16.5 437.5H23M20.5 424.5H23M16.5 410.5H23M20.5 396.5H23M16.5 383.5H23M20.5 369.5H23M16.5 355.5H23M20.5 342.5H23M16.5 328.5H23M20.5 314.5H23M16.5 301.5H23M20.5 287.5H23M16.5 273.5H23M20.5 260.5H23M16.5 246.5H23M20.5 232.5H23M16.5 219.5H23M20.5 205.5H23M16.5 191.5H23M20.5 178.5H23M16.5 164.5H23M20.5 151.5H23M16.5 137.5H23M20.5 123.5H23M16.5 110.5H23M20.5 96.5H23M16.5 82.5H23M20.5 69.5H23M16.5 55.5H23M20.5 41.5H23M16.5 28.5H23M20.5 14.5H23M16.5 0.5H23" stroke="#4e4e4e" stroke-width="1" fill="none"/>
<path d="M13 308.4v10.8l6.2-5.4z" fill="#000"/></svg>
<span class="rl" style="left:-7.8px;top:569.5px;width:30px;text-align:center;transform:rotate(-90deg)">4</span>
<span class="rl" style="left:-7.8px;top:541.5px;width:30px;text-align:center;transform:rotate(-90deg)">6</span>
<span class="rl" style="left:-7.8px;top:514.5px;width:30px;text-align:center;transform:rotate(-90deg)">8</span>
<span class="rl" style="left:-7.8px;top:487.5px;width:30px;text-align:center;transform:rotate(-90deg)">10</span>
<span class="rl" style="left:-7.8px;top:459.5px;width:30px;text-align:center;transform:rotate(-90deg)">12</span>
<span class="rl" style="left:-7.8px;top:432.5px;width:30px;text-align:center;transform:rotate(-90deg)">14</span>
<span class="rl" style="left:-7.8px;top:405.5px;width:30px;text-align:center;transform:rotate(-90deg)">16</span>
<span class="rl" style="left:-7.8px;top:378.5px;width:30px;text-align:center;transform:rotate(-90deg)">18</span>
<span class="rl" style="left:-7.8px;top:350.5px;width:30px;text-align:center;transform:rotate(-90deg)">20</span>
<span class="rl" style="left:-7.8px;top:323.5px;width:30px;text-align:center;transform:rotate(-90deg)">22</span>
<span class="rl" style="left:-7.8px;top:296.5px;width:30px;text-align:center;transform:rotate(-90deg)">24</span>
<span class="rl" style="left:-7.8px;top:268.5px;width:30px;text-align:center;transform:rotate(-90deg)">26</span>
<span class="rl" style="left:-7.8px;top:241.5px;width:30px;text-align:center;transform:rotate(-90deg)">28</span>
<span class="rl" style="left:-7.8px;top:214.5px;width:30px;text-align:center;transform:rotate(-90deg)">30</span>
<span class="rl" style="left:-7.8px;top:186.5px;width:30px;text-align:center;transform:rotate(-90deg)">32</span>
<span class="rl" style="left:-7.8px;top:159.5px;width:30px;text-align:center;transform:rotate(-90deg)">34</span>
<span class="rl" style="left:-7.8px;top:132.5px;width:30px;text-align:center;transform:rotate(-90deg)">36</span>
<span class="rl" style="left:-7.8px;top:105.5px;width:30px;text-align:center;transform:rotate(-90deg)">38</span>
<span class="rl" style="left:-7.8px;top:77.5px;width:30px;text-align:center;transform:rotate(-90deg)">40</span>
<span class="rl" style="left:-7.8px;top:50.5px;width:30px;text-align:center;transform:rotate(-90deg)">42</span>
<span class="rl" style="left:-7.8px;top:23.5px;width:30px;text-align:center;transform:rotate(-90deg)">44</span>
<span class="rl" style="left:-7.8px;top:-1.6px;width:30px;text-align:center;transform:rotate(-90deg)">4</span>
</div>
<div id="right">
<div class="abs" style="left:0;top:0;width:299px;height:23px;background:linear-gradient(#ebebeb,#dedede)"></div>
<svg width="40" height="23" style="left:0;top:0"><circle cx="9" cy="10" r="7" fill="#6c6c6c"/><path d="M5.8 6.8l6.4 6.4M12.2 6.8l-6.4 6.4" stroke="#f2f2f2" stroke-width="2.2" fill="none"/><circle cx="27" cy="10" r="7" fill="#6c6c6c"/><path d="M25.6 7.4h5.4v4.6h-5.4z" fill="none" stroke="#f4f4f4" stroke-width="1.3"/><path d="M23.2 9.8h5.4v4.4h-5.4z" fill="#6c6c6c" stroke="#f4f4f4" stroke-width="1.3"/></svg>
<span class="abs" style="left:92.4px;top:3px;transform:translateY(0.5px);width:150px;text-align:center;font-size:11px;line-height:15px;color:#222;letter-spacing:0.35px;-webkit-text-stroke:0.25px #222">Lagenlijst</span>
<div class="abs" style="left:0;top:22px;width:299px;height:27px;background:#c9c9c9"></div>
<div class="lbtn" style="left:0"></div>
<div class="lbtn" style="left:60px"></div>
<div class="lbtn" style="left:120px"></div>
<div class="lbtn" style="left:180px"></div>
<div class="lbtn" style="left:240px;width:57.6px"></div>
<svg width="299" height="160" viewBox="1155 108 299 160" style="left:0;top:0">
<defs>
<g id="eye">
<path d="M-7.8 0.3C-6.6 -3.8 -3 -5.6 0.3 -5.6C4 -5.6 6.8 -3.4 7.8 0C6.6 3.4 3.6 5.6 0 5.6C-3.6 5.6 -6.6 3.6 -7.8 0.3Z"/>
<path d="M-5 -1.2C-4.7 1.9 -2.5 4 0 4C2.6 4 4.7 1.9 5 -1.2C4.5 -1.5 3.8 -1.3 3.5 -0.8C3.1 1.1 1.7 2.3 0 2.3C-1.7 2.3 -3.1 1.1 -3.5 -0.8C-3.8 -1.3 -4.5 -1.5 -5 -1.2Z" fill="#fff"/>
<circle cx="-0.9" cy="-0.7" r="0.7" fill="#9a9a9a"/>
</g>
<g id="lock">
<path d="M-3.2 -0.4V-3.4A3.2 3.2 0 0 1 3.2 -3.4V-0.4" fill="none" stroke="#b6b6b6" stroke-width="1.4"/>
<rect x="-4.9" y="-0.9" width="9.7" height="7.7" fill="#b6b6b6"/>
</g>
<g id="pcl">
<path d="M0 0L2.6 -1.55H17.2a0.8 0.8 0 0 1 0.8 0.8V0.75a0.8 0.8 0 0 1 -0.8 0.8H2.6Z" fill="#dc9a2c" stroke="#a06a18" stroke-width="0.5"/>
<path d="M2.6 -0.5H14" stroke="#f0c060" stroke-width="0.8"/>
<path d="M0 0L2.6 -1.55V1.55Z" fill="#ecd2a0"/>
<path d="M0 0L1.1 -0.65V0.65Z" fill="#5a3a10"/>
<path d="M14.4 -1.6h3a0.7 0.7 0 0 1 0.7 0.7V0.9a0.7 0.7 0 0 1 -0.7 0.7h-3z" fill="#e81c24"/>
</g>
</defs>
<use href="#eye" x="1185.3" y="142.8" fill="#000"/>
<g opacity="0.36"><use href="#eye" x="1245" y="142.8" fill="#000"/></g>
<path d="M1303.6 137.4h2.5v4.4h4.4v2.5h-4.4v4.4h-2.5v-4.4h-4.4v-2.5h4.4z" fill="#ff0000" stroke="#b00000" stroke-width="0.5"/>
<rect x="1359.4" y="141.8" width="11.4" height="2.5" fill="#ff0000" stroke="#b00000" stroke-width="0.5"/>
<use href="#pcl" transform="translate(1418.2 149.6) rotate(-44.5)"/>
</svg>

<div class="lrow" style="top:50px"><b style="background:#fff"></b><span>0</span></div>
<div class="lrow" style="top:70px"><b style="background:#ff0000"></b><span>Center</span></div>
<div class="lrow" style="top:90px"><b style="background:#fff"></b><span>Defpoints</span></div>
<div class="lrow" style="top:110px"><b style="background:#0091ff"></b><span style="letter-spacing:0.1px">Dimensions</span></div>
<div class="lrow" style="top:130px"><b style="background:#000"></b><span>Hidden</span></div>
<svg width="299" height="160" viewBox="1155 108 299 160" style="left:0;top:0">
<use href="#eye" x="1422.9" y="166.5" fill="#000"/><use href="#lock" x="1445.1" y="167"/>
<use href="#eye" x="1422.9" y="186.5" fill="#000"/><use href="#lock" x="1445.1" y="187"/>
<use href="#eye" x="1422.9" y="206.5" fill="#000"/><use href="#lock" x="1445.1" y="207"/>
<use href="#eye" x="1422.9" y="226.5" fill="#000"/><use href="#lock" x="1445.1" y="227"/>
<use href="#eye" x="1422.9" y="246.5" fill="#000"/><use href="#lock" x="1445.1" y="247"/>
<use href="#pcl" transform="translate(1394.2 193.5) rotate(-44.5)"/>
</svg>

</div>
<div id="rtb">
<div class="abs" style="left:0;top:0;width:1px;height:691px;background:#cecece"></div><div class="abs" style="left:1px;top:0;width:1px;height:691px;background:#f8f8f8"></div>
<svg width="46" height="4" style="left:0;top:9px"><path d="M8 1H34" stroke="#a6a6a6" stroke-width="2" stroke-dasharray="2 4" fill="none"/></svg>
<div class="sel" style="left:2px;top:13px;width:44px;height:42px;background:#b5b5b5"></div>
<div class="sel" style="left:2px;top:310px;width:44px;height:42px;background:#b5b5b5"></div>
<div class="hsep" style="top:154px"></div>
<div class="hsep" style="top:302px"></div>
<div class="wi" style="top:20px"></div>
<div class="wi" style="top:67px"></div>
<div class="wi" style="top:113px"></div>
<div class="wi" style="top:169px"></div>
<div class="wi" style="top:215px"></div>
<div class="wi" style="top:261px"></div>
<div class="wi" style="top:317px"></div>
<div class="wi" style="top:364px"></div>
<svg width="46" height="691" viewBox="1454 107 46 691" style="left:0;top:0">
<!-- 1: layers -->
<path d="M1470 143.6l6.6-3.4v9l-6.6 3.4z" fill="#c8c8c8" stroke="#555" stroke-width="0.7"/>
<path d="M1472.6 142.4l6.6-3.4v9l-6.6 3.4z" fill="#dcdcdc" stroke="#555" stroke-width="0.7"/>
<path d="M1475.4 141l8-4v9.2l-8 4z" fill="#f6f6f6" stroke="#555" stroke-width="0.7"/>
<path d="M1477.6 147.6l4-7.4l0.4 6.6M1478.6 145.6l3 -0.8" stroke="#ee3030" stroke-width="0.8" fill="none"/>
<!-- 2: blocks -->
<rect x="1470.2" y="184.6" width="10.6" height="7.6" fill="#f6eec4" stroke="#777" stroke-width="0.8"/>
<circle cx="1480" cy="191.6" r="4" fill="#f6eec4" stroke="#777" stroke-width="0.8"/>
<!-- 3: view -->
<rect x="1468.4" y="230.6" width="16.6" height="10.6" rx="2.4" fill="#f4f4f2" stroke="#bcd0ec" stroke-width="0.9"/>
<!-- 4: property editor -->
<path d="M1466 286h4M1466 292h4M1466 298h4" stroke="#000" stroke-width="3"/>
<rect x="1472.6" y="284.6" width="13.6" height="2.8" fill="#fff" stroke="#333" stroke-width="0.6"/>
<rect x="1472.6" y="290.6" width="13.6" height="2.8" fill="#fff" stroke="#333" stroke-width="0.6"/>
<rect x="1472.6" y="296.6" width="13.6" height="2.8" fill="#fff" stroke="#333" stroke-width="0.6"/>
<!-- 5: funnel -->
<path d="M1469.6 331.6h14.8l-6 6v7.4l-2.4-1.4v-6z" fill="#b4b4b4" stroke="#6a6a6a" stroke-width="0.6" stroke-linejoin="round"/>
<ellipse cx="1477" cy="331.6" rx="7.4" ry="1.5" fill="#8a8a8a"/>
<!-- 6: library (screw) -->
<path d="M1469.4 377.4v12.4l4.2-2.2v-8zM1473.6 379.6h9a1.6 1.6 0 0 1 1.6 1.6v4.8a1.6 1.6 0 0 1 -1.6 1.6h-9z" fill="#e8e8e8" stroke="#555" stroke-width="0.7" stroke-linejoin="round"/>
<rect x="1477.4" y="380" width="6.4" height="7.2" fill="#8a8a8a"/>
<path d="M1467 383.6h19" stroke="#ff6a6a" stroke-width="0.6" stroke-dasharray="2.4 0.8 0.8 0.8" opacity="0.8"/>
<!-- 7: command line -->
<path d="M1465.4 432.8h10M1465.4 436.1h8.4M1465.4 439.4h10.6M1465.4 442.7h11.4" stroke="#666" stroke-width="1" stroke-dasharray="2 0.5 1.4 0.4"/>
<path d="M1463.4 446.6h27.4" stroke="#222" stroke-width="0.7"/>
<path d="M1465 449.6h2.2M1471.4 449.6h13" stroke="#444" stroke-width="1.1" stroke-dasharray="1.6 0.4"/>
<!-- 8: clipboard -->
<rect x="1470.6" y="480" width="12.4" height="13.4" rx="0.8" fill="#d4911f" stroke="#a9700f" stroke-width="0.6"/>
<rect x="1472" y="481.4" width="9.6" height="10.8" fill="#f4f4f4"/>
<path d="M1473.4 484.6h6.8M1473.4 486.4h6.4M1473.4 488.2h5.4" stroke="#c8c8c8" stroke-width="0.7"/>
<rect x="1474" y="478.6" width="5.6" height="3" rx="0.6" fill="#a9a99f" stroke="#6c6c64" stroke-width="0.5"/>
<path d="M1481.6 489.4v2.8h-2.8z" fill="#b3b3b3"/>
</svg>

</div>
<div id="status">
<div class="abs" style="left:0;top:0;width:1500px;height:1px;background:#cfcfcf"></div>
<span style="left:2px;top:8.8px;letter-spacing:0.42px">53.9806,23.0719</span>
<span style="left:2px;top:28.8px;letter-spacing:0.31px">@53.9806,23.0719</span>
<div class="abs" style="left:253px;top:4px;width:1px;height:40px;background:#8a8a8a"></div>
<span style="left:256px;top:8.8px;letter-spacing:0.45px">58.7045&lt;23°</span>
<span style="left:256px;top:28.8px;letter-spacing:0.36px">@58.7045&lt;23°</span>
<div class="dot" style="left:506px;top:20px"></div>
<span style="left:572.4px;top:18.2px;letter-spacing:0.38px">Object of gebied selecteren</span>
<svg width="20" height="32" style="left:716px;top:7px"><rect x="1.5" y="1.5" width="17" height="28.5" rx="8.5" ry="8.5" fill="#fff" stroke="#333" stroke-width="1"/><path d="M1.5 14.5Q10 11.5 18.5 14.5" stroke="#333" stroke-width="1" fill="none"/><rect x="8.7" y="3" width="2.6" height="8" rx="1.3" fill="#fff" stroke="#333" stroke-width="0.9"/><path d="M10 11v2" stroke="#333" stroke-width="1"/></svg>
<div class="dot" style="left:940px;top:20px"></div>
<span style="left:949.2px;top:18.2px;letter-spacing:0.31px">Geen objecten geselecteerd.</span>
<div class="dot" style="left:1269px;top:20px"></div>
</div>
</div>
</body>
</html>
